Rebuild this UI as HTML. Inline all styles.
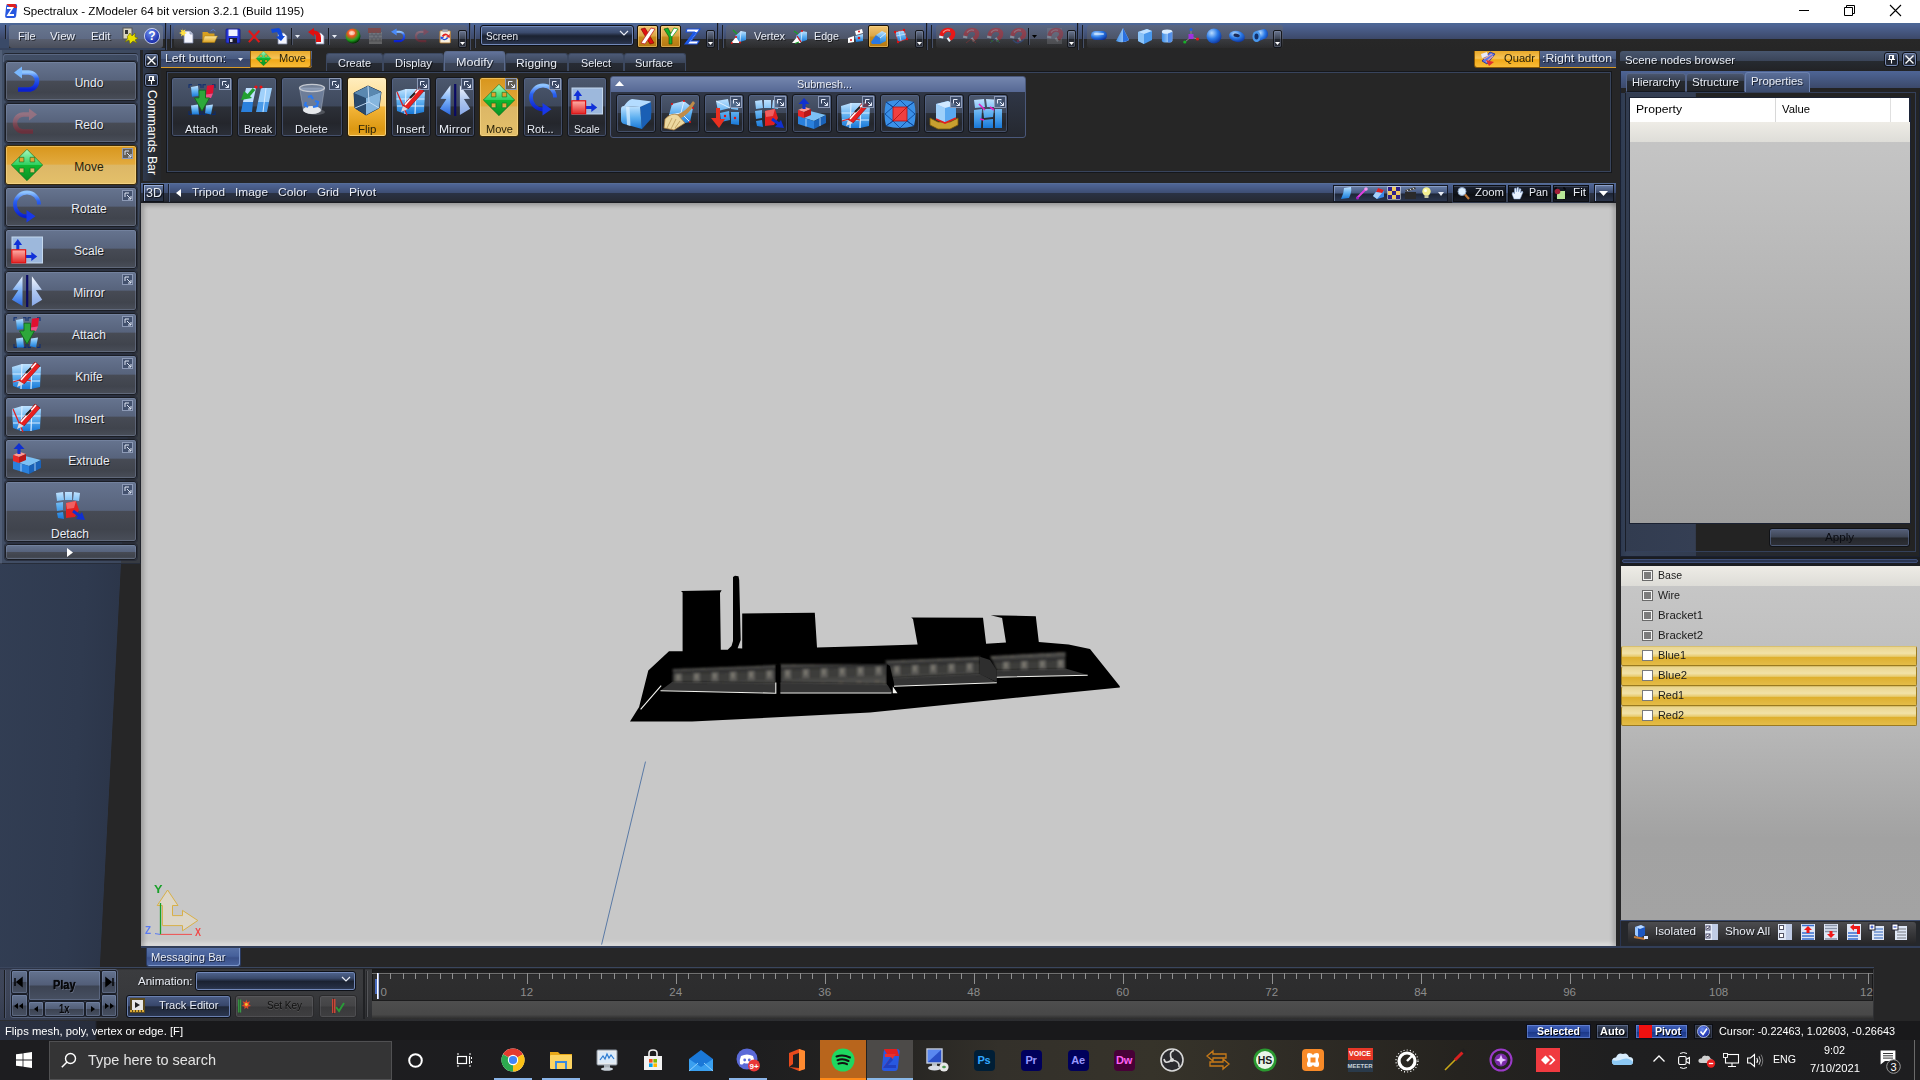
<!DOCTYPE html>
<html><head><meta charset="utf-8"><title>ZModeler</title><style>
html,body{margin:0;padding:0;}
body{width:1920px;height:1080px;overflow:hidden;position:relative;background:#222324;font-family:"Liberation Sans",sans-serif;font-size:12px;color:#e8ecf4;}
div{position:absolute;box-sizing:border-box;}
svg{position:absolute;overflow:visible;}
.t{white-space:nowrap;line-height:14px;font-size:12px;}
.ts{white-space:nowrap;line-height:14px;font-size:12px;text-shadow:1px 1px 0 rgba(0,0,0,.6);}
.btn{border:1px solid #1a1d24;border-radius:3px;background:linear-gradient(#66748f 0%,#57637c 48%,#474b55 50%,#40444d 80%,#494e59 100%);box-shadow:inset 0 0 0 1px rgba(140,155,185,.35);}
.btny{border:1px solid #3a2a08;border-radius:3px;background:linear-gradient(#d8961c 0%,#e2aa3e 48%,#dcb766 50%,#e4c06a 100%);box-shadow:inset 0 0 0 1px rgba(255,225,150,.5);}
.cbtn{border:1px solid #15171c;border-radius:3px;background:linear-gradient(#4c586e 0%,#3e485c 48%,#2c3038 50%,#24262c 78%,#2b2f38 100%);box-shadow:inset 0 0 0 1px rgba(90,108,150,.55);}
.cbtny{border:1px solid #2a1c04;border-radius:3px;background:linear-gradient(#ffedbe 0%,#fcd98a 48%,#f4b63a 50%,#dc9812 88%,#e6a626 100%);box-shadow:inset 0 0 0 1px rgba(255,240,190,.6);}
.pop{border:1px solid #8d9ab6;background:rgba(58,72,102,.75);}
</style></head><body><div style="left:0px;top:0px;width:1920px;height:23px;background:#fff;"></div>
<div class="t" style="left:23px;top:5px;font-size:11.5px;line-height:13.5px;transform-origin:0 0;transform:scaleX(1.0115);color:#000;">Spectralux - ZModeler 64 bit version 3.2.1 (Build 1195)</div>
<div style="left:0px;top:23px;width:1920px;height:27px;background:linear-gradient(#4a6896 0,#4e6494 2px,#3c4868 16px,#272727 16.5px,#262626 100%);"></div>
<div style="left:0px;top:50px;width:1920px;height:990px;background:#262627;"></div>
<div style="left:0px;top:50px;width:141px;height:918px;background:linear-gradient(93deg,#333f55 0%,#2f3a4f 60%,#2c364a 78%,#262627 78.4%);"></div>
<div style="left:141px;top:202.5px;width:1475px;height:743.5px;background:#c8c8c8;box-shadow:inset 5px 5px 4px -2px rgba(0,0,0,.22),inset -5px 0 4px -2px rgba(0,0,0,.18),inset 0 -5px 4px -2px rgba(255,255,255,.45);"></div>
<div style="left:0px;top:1040px;width:1920px;height:40px;background:#1f1f21;"></div>
<svg width="0" height="0" style="position:absolute"><defs>
<linearGradient id="gBlue" x1="0" y1="0" x2="0" y2="1"><stop offset="0" stop-color="#8fc4ff"/><stop offset=".35" stop-color="#2a62f0"/><stop offset="1" stop-color="#0a1fd0"/></linearGradient>
<linearGradient id="gRed" x1="0" y1="0" x2="0" y2="1"><stop offset="0" stop-color="#c07880"/><stop offset="1" stop-color="#8a2030"/></linearGradient>
<linearGradient id="gGreen" x1="0" y1="0" x2="1" y2="1"><stop offset="0" stop-color="#7df09a"/><stop offset=".5" stop-color="#19b93a"/><stop offset="1" stop-color="#078a1e"/></linearGradient>
<linearGradient id="gLB" x1="0" y1="0" x2="0" y2="1"><stop offset="0" stop-color="#bfe2ff"/><stop offset=".5" stop-color="#5fb0f0"/><stop offset="1" stop-color="#1878d8"/></linearGradient>
<linearGradient id="gLB2" x1="0" y1="0" x2="1" y2="0"><stop offset="0" stop-color="#3f8fe8"/><stop offset="1" stop-color="#cfe6ff"/></linearGradient>
<linearGradient id="gRedBox" x1="0" y1="0" x2="0" y2="1"><stop offset="0" stop-color="#ffb0a8"/><stop offset="1" stop-color="#e02828"/></linearGradient>
<radialGradient id="gBall" cx=".4" cy=".3" r=".7"><stop offset="0" stop-color="#ffd0a0"/><stop offset=".35" stop-color="#f05020"/><stop offset=".7" stop-color="#20a020"/><stop offset="1" stop-color="#003000"/></radialGradient>
<radialGradient id="gHelp" cx=".4" cy=".3" r=".8"><stop offset="0" stop-color="#6a8cf0"/><stop offset="1" stop-color="#0a1a9a"/></radialGradient>
<radialGradient id="gSph" cx=".35" cy=".3" r=".8"><stop offset="0" stop-color="#b8dcff"/><stop offset=".5" stop-color="#2a7ae8"/><stop offset="1" stop-color="#0a2a90"/></radialGradient>
<linearGradient id="gFold" x1="0" y1="0" x2="0" y2="1"><stop offset="0" stop-color="#ffe9a0"/><stop offset="1" stop-color="#d9a020"/></linearGradient>
<linearGradient id="gGlass" x1="0" y1="0" x2="1" y2="1"><stop offset="0" stop-color="#e8f0f8"/><stop offset="1" stop-color="#98a4b4"/></linearGradient>
<linearGradient id="gMirL" x1="0" y1="0" x2="0" y2="1"><stop offset="0" stop-color="#e8f2ff"/><stop offset=".5" stop-color="#7ab0f8"/><stop offset="1" stop-color="#2a68e0"/></linearGradient>
<linearGradient id="gMirR" x1="0" y1="0" x2="0" y2="1"><stop offset="0" stop-color="#f4f8ff"/><stop offset=".5" stop-color="#b0c8f0"/><stop offset="1" stop-color="#88a8e8"/></linearGradient>
<linearGradient id="gGreen2" x1="0" y1="0" x2="0" y2="1"><stop offset="0" stop-color="#a8f8c0"/><stop offset=".49" stop-color="#30d060"/><stop offset=".5" stop-color="#10b830"/><stop offset="1" stop-color="#0a9024"/></linearGradient>
</defs></svg>
<div style="left:0px;top:50px;width:141px;height:514px;background:rgba(120,135,165,.22);border-right:1px solid #20242c;border-bottom:1px solid #272d3a;"></div>
<div style="left:0px;top:50px;width:2px;height:514px;background:rgba(150,165,195,.18);"></div>
<div style="left:3px;top:54px;width:135px;height:8px;border:1px solid #596680;border-bottom:0;border-radius:3px 3px 0 0;box-shadow:0 -1px 0 #222732;"></div>
<div style="left:4px;top:60px;width:134px;height:42px;border:1px solid rgba(20,24,32,.55);border-radius:4px;background:rgba(90,100,125,.35);"></div>
<div class="btn" style="left:5px;top:61px;width:132px;height:40px;"></div>
<svg style="left:11px;top:65px;" width="32" height="32" viewBox="0 0 32 32"><path d="M10 7.5 H17.5 A8.5 8.5 0 0 1 17.5 24.5 H7" fill="none" stroke="url(#gBlue)" stroke-width="4.6"/><path d="M3 7.5 L11 1.5 L11 13.5 Z" fill="#7ab8ff"/></svg>
<div class="ts" style="left:43px;top:76px;width:92px;text-align:center;">Undo</div>
<div style="left:4px;top:102px;width:134px;height:42px;border:1px solid rgba(20,24,32,.55);border-radius:4px;background:rgba(90,100,125,.35);"></div>
<div class="btn" style="left:5px;top:103px;width:132px;height:40px;"></div>
<svg style="left:11px;top:107px;" width="32" height="32" viewBox="0 0 32 32"><g opacity=".55"><path d="M18 7.5 H12.5 A8.5 8.5 0 0 0 12.5 24.5 H22" fill="none" stroke="url(#gRed)" stroke-width="4.6"/><path d="M26 7.5 L18 1.5 L18 13.5 Z" fill="#c07880"/></g></svg>
<div class="ts" style="left:43px;top:118px;width:92px;text-align:center;">Redo</div>
<div style="left:4px;top:144px;width:134px;height:42px;border:1px solid rgba(20,24,32,.55);border-radius:4px;background:rgba(90,100,125,.35);"></div>
<div class="btny" style="left:5px;top:145px;width:132px;height:40px;"></div>
<svg style="left:11px;top:149px;" width="32" height="32" viewBox="0 0 32 32"><path fill-rule="evenodd" fill="url(#gGreen2)" stroke="#0a6a1a" stroke-width=".6" d="M16 0.3 L31.7 16 L16 31.7 L0.3 16 Z M8.3 8.3 h4.6 v4.6 h-4.6 Z M19.1 8.3 h4.6 v4.6 h-4.6 Z M8.3 19.1 h4.6 v4.6 h-4.6 Z M19.1 19.1 h4.6 v4.6 h-4.6 Z"/></svg>
<div class="t" style="left:43px;top:160px;width:92px;text-align:center;color:#2a2208;">Move</div>
<div class="pop" style="left:122px;top:148px;width:11px;height:11px;"><svg width="9" height="9" viewBox="0 0 9 9" style="left:0;top:0"><path d="M2 6 V2 H6" fill="none" stroke="#dfe6f4" stroke-width="1"/><path d="M4 4 L8 8 M8 5 V8 H5" fill="none" stroke="#dfe6f4" stroke-width="1"/></svg></div>
<div style="left:4px;top:186px;width:134px;height:42px;border:1px solid rgba(20,24,32,.55);border-radius:4px;background:rgba(90,100,125,.35);"></div>
<div class="btn" style="left:5px;top:187px;width:132px;height:40px;"></div>
<svg style="left:11px;top:191px;" width="32" height="32" viewBox="0 0 32 32"><path d="M28 13.5 A12 12 0 1 0 16 25.5" fill="none" stroke="url(#gBlue)" stroke-width="3.8"/><path d="M15.5 19 L24.5 25.2 L15.5 31.5 Z" fill="#1838e8"/></svg>
<div class="ts" style="left:43px;top:202px;width:92px;text-align:center;">Rotate</div>
<div class="pop" style="left:122px;top:190px;width:11px;height:11px;"><svg width="9" height="9" viewBox="0 0 9 9" style="left:0;top:0"><path d="M2 6 V2 H6" fill="none" stroke="#dfe6f4" stroke-width="1"/><path d="M4 4 L8 8 M8 5 V8 H5" fill="none" stroke="#dfe6f4" stroke-width="1"/></svg></div>
<div style="left:4px;top:228px;width:134px;height:42px;border:1px solid rgba(20,24,32,.55);border-radius:4px;background:rgba(90,100,125,.35);"></div>
<div class="btn" style="left:5px;top:229px;width:132px;height:40px;"></div>
<svg style="left:11px;top:233px;" width="32" height="32" viewBox="0 0 32 32"><rect x="1" y="4" width="30.5" height="26" fill="#9db8dc" stroke="#c4d8ee" stroke-width="1"/><path d="M6.8 17 V11" stroke="#1030d8" stroke-width="3"/><path d="M2.5 12 L6.8 6 L11.1 12 Z" fill="#1030d8"/><path d="M15 23.5 H21" stroke="#1030d8" stroke-width="3"/><path d="M20.3 19 L26.2 23.5 L20.3 28 Z" fill="#1030d8"/><rect x="0.8" y="16.8" width="13.8" height="13" fill="url(#gRedBox)" stroke="#e01010" stroke-width="1.2"/></svg>
<div class="ts" style="left:43px;top:244px;width:92px;text-align:center;">Scale</div>
<div style="left:4px;top:270px;width:134px;height:42px;border:1px solid rgba(20,24,32,.55);border-radius:4px;background:rgba(90,100,125,.35);"></div>
<div class="btn" style="left:5px;top:271px;width:132px;height:40px;"></div>
<svg style="left:11px;top:275px;" width="32" height="32" viewBox="0 0 32 32"><path d="M11.5 1.3 L1.5 14.75 L7.4 15 L0.9 24.75 L11.5 31 Z" fill="url(#gMirL)"/><path d="M20.9 1.3 L30.9 14.75 L24.9 15 L31.2 24.75 L20.9 31 Z" fill="url(#gMirR)"/><path d="M16.2 0 V32" stroke="#0a0a64" stroke-width="2.2"/></svg>
<div class="ts" style="left:43px;top:286px;width:92px;text-align:center;">Mirror</div>
<div class="pop" style="left:122px;top:274px;width:11px;height:11px;"><svg width="9" height="9" viewBox="0 0 9 9" style="left:0;top:0"><path d="M2 6 V2 H6" fill="none" stroke="#dfe6f4" stroke-width="1"/><path d="M4 4 L8 8 M8 5 V8 H5" fill="none" stroke="#dfe6f4" stroke-width="1"/></svg></div>
<div style="left:4px;top:312px;width:134px;height:42px;border:1px solid rgba(20,24,32,.55);border-radius:4px;background:rgba(90,100,125,.35);"></div>
<div class="btn" style="left:5px;top:313px;width:132px;height:40px;"></div>
<svg style="left:11px;top:317px;" width="32" height="32" viewBox="0 0 32 32"><g transform="translate(0,-1.5) scale(1,1.1)"><g fill="none" stroke="#0a2a70" stroke-width="1"><path d="M3 5 V2 H6 M12 2 H15 V5"/><path d="M17 5 V2 H20 M26 2 H29 V5"/><path d="M3 26 V29 H6 M12 29 H15 V26"/><path d="M17 26 V29 H20 M26 29 H29 V26"/></g><path d="M5 4 L12 3 L13 12 L6 13 Z" fill="url(#gLB)"/><path d="M5 21 L12 20 L13 29 L6 29 Z" fill="url(#gLB)"/><path d="M20 21 L27 20 L25 29 L19 28 Z" fill="url(#gLB)"/><path d="M21 3 L28 2 L27 10 L20 11 Z" fill="#e01030"/><path d="M20 11 L27 10 L25 14 L20 14 Z" fill="#f05088"/><path d="M13 7 L19.5 7 L19.5 14 L23.5 14 L16 26 L8.5 14 L13 14 Z" fill="#2da83a" stroke="#0d6a1a" stroke-width=".8"/></g></svg>
<div class="ts" style="left:43px;top:328px;width:92px;text-align:center;">Attach</div>
<div class="pop" style="left:122px;top:316px;width:11px;height:11px;"><svg width="9" height="9" viewBox="0 0 9 9" style="left:0;top:0"><path d="M2 6 V2 H6" fill="none" stroke="#dfe6f4" stroke-width="1"/><path d="M4 4 L8 8 M8 5 V8 H5" fill="none" stroke="#dfe6f4" stroke-width="1"/></svg></div>
<div style="left:4px;top:354px;width:134px;height:42px;border:1px solid rgba(20,24,32,.55);border-radius:4px;background:rgba(90,100,125,.35);"></div>
<div class="btn" style="left:5px;top:355px;width:132px;height:40px;"></div>
<svg style="left:11px;top:359px;" width="32" height="32" viewBox="0 0 32 32"><path d="M1 8 L11 5 L21 5 L30 8 L29 28 L20 30 L10 30 L2 27 Z" fill="url(#gLB)"/><path d="M11 5 L10 30 M21 5 L20 30 M1.5 15 L29.5 15 M2 22 L29 22" stroke="#d8ecff" stroke-width="1.2" fill="none"/><path d="M2 23 L12 20 L20 22" stroke="#e02020" stroke-width="1.2" fill="none"/><path d="M8 22 L24 3 L29 7 L13 25 Z" fill="#e82020" stroke="#8a0808" stroke-width=".6"/><path d="M10 21 L25 4" stroke="#fff" stroke-width="1.5"/><path d="M15 14 L20 9" stroke="#222" stroke-width="2"/><path d="M8 22 L13 25 L6 28 Z" fill="#d8d8e0"/></svg>
<div class="ts" style="left:43px;top:370px;width:92px;text-align:center;">Knife</div>
<div class="pop" style="left:122px;top:358px;width:11px;height:11px;"><svg width="9" height="9" viewBox="0 0 9 9" style="left:0;top:0"><path d="M2 6 V2 H6" fill="none" stroke="#dfe6f4" stroke-width="1"/><path d="M4 4 L8 8 M8 5 V8 H5" fill="none" stroke="#dfe6f4" stroke-width="1"/></svg></div>
<div style="left:4px;top:396px;width:134px;height:42px;border:1px solid rgba(20,24,32,.55);border-radius:4px;background:rgba(90,100,125,.35);"></div>
<div class="btn" style="left:5px;top:397px;width:132px;height:40px;"></div>
<svg style="left:11px;top:401px;" width="32" height="32" viewBox="0 0 32 32"><path d="M1 8 L11 5 L21 5 L30 8 L29 28 L20 30 L10 30 L2 27 Z" fill="url(#gLB)"/><path d="M11 5 L10 30 M21 5 L20 30 M1.5 15 L29.5 15 M2 22 L29 22" stroke="#d8ecff" stroke-width="1.2" fill="none"/><path d="M2 8 L12 31" stroke="#e02020" stroke-width="1.3" fill="none"/><path d="M8 22 L24 3 L29 7 L13 25 Z" fill="#e82020" stroke="#8a0808" stroke-width=".6"/><path d="M10 21 L25 4" stroke="#fff" stroke-width="1.5"/><path d="M15 14 L20 9" stroke="#222" stroke-width="2"/><path d="M8 22 L13 25 L6 28 Z" fill="#d8d8e0"/></svg>
<div class="ts" style="left:43px;top:412px;width:92px;text-align:center;">Insert</div>
<div class="pop" style="left:122px;top:400px;width:11px;height:11px;"><svg width="9" height="9" viewBox="0 0 9 9" style="left:0;top:0"><path d="M2 6 V2 H6" fill="none" stroke="#dfe6f4" stroke-width="1"/><path d="M4 4 L8 8 M8 5 V8 H5" fill="none" stroke="#dfe6f4" stroke-width="1"/></svg></div>
<div style="left:4px;top:438px;width:134px;height:42px;border:1px solid rgba(20,24,32,.55);border-radius:4px;background:rgba(90,100,125,.35);"></div>
<div class="btn" style="left:5px;top:439px;width:132px;height:40px;"></div>
<svg style="left:11px;top:443px;" width="32" height="32" viewBox="0 0 32 32"><path d="M2 18 L14 13 L30 17 L18 23 Z" fill="#7cc0f4"/><path d="M2 18 L18 23 L18 31 L2 26 Z" fill="#2a80dc"/><path d="M18 23 L30 17 L30 25 L18 31 Z" fill="#1a62b8"/><path d="M10 20.5 L10 28.5 M24 20 L24 28" stroke="#bfe0ff" stroke-width=".8"/><path d="M2 12 L9 9 L15 11 L8 14 Z" fill="#ff9a90"/><path d="M2 12 L8 14 L8 20 L2 18 Z" fill="#e82828"/><path d="M8 14 L15 11 L15 17 L8 20 Z" fill="#b81818"/><path d="M8 11 V5" stroke="#1030d0" stroke-width="3.2"/><path d="M2.5 6 L8 0 L13.5 6 Z" fill="#1030d0"/></svg>
<div class="ts" style="left:43px;top:454px;width:92px;text-align:center;">Extrude</div>
<div class="pop" style="left:122px;top:442px;width:11px;height:11px;"><svg width="9" height="9" viewBox="0 0 9 9" style="left:0;top:0"><path d="M2 6 V2 H6" fill="none" stroke="#dfe6f4" stroke-width="1"/><path d="M4 4 L8 8 M8 5 V8 H5" fill="none" stroke="#dfe6f4" stroke-width="1"/></svg></div>
<div style="left:4px;top:480px;width:134px;height:63px;border:1px solid rgba(20,24,32,.55);border-radius:4px;background:rgba(90,100,125,.35);"></div>
<div class="btn" style="left:5px;top:481px;width:132px;height:61px;"></div>
<svg style="left:53px;top:490px;" width="32" height="32" viewBox="0 0 32 32"><path d="M3 3 L10 2 L11 10 L4 11 Z M12 2 L19 2 L19 10 L12 10 Z M21 2 L27 3 L26 11 L20 10 Z M3 13 L10 12 L10 20 L4 21 Z M4 23 L10 22 L11 29 L5 28 Z" fill="url(#gLB)"/><path d="M13 13 L23 11 L26 20 L22 27 L13 28 Z" fill="#e02020"/><path d="M13 13 L23 11 L21 18 L14 19 Z" fill="#f06060"/><path d="M20 21 L27 26" stroke="#1030d0" stroke-width="3"/><path d="M29 22 L32 30 L23 29 Z" fill="#1030d0"/></svg>
<div class="ts" style="left:6px;top:527px;width:128px;text-align:center;">Detach</div>
<div class="pop" style="left:122px;top:484px;width:11px;height:11px;"><svg width="9" height="9" viewBox="0 0 9 9" style="left:0;top:0"><path d="M2 6 V2 H6" fill="none" stroke="#dfe6f4" stroke-width="1"/><path d="M4 4 L8 8 M8 5 V8 H5" fill="none" stroke="#dfe6f4" stroke-width="1"/></svg></div>
<div style="left:4px;top:543px;width:134px;height:18px;border:1px solid rgba(20,24,32,.55);border-radius:4px;background:rgba(90,100,125,.35);"></div>
<div class="btn" style="left:5px;top:544px;width:132px;height:16px;"></div>
<svg style="left:67px;top:548px;" width="6" height="9" viewBox="0 0 6 9"><path d="M0 0 L6 4.5 L0 9 Z" fill="#fff"/></svg>
<div style="left:165px;top:23px;width:1px;height:27px;background:#171a21;"></div>
<div style="left:166px;top:23px;width:1px;height:27px;background:#4b5876;opacity:.8;"></div>
<div style="left:469px;top:23px;width:1px;height:27px;background:#171a21;"></div>
<div style="left:470px;top:23px;width:1px;height:27px;background:#4b5876;opacity:.8;"></div>
<div style="left:717px;top:23px;width:1px;height:27px;background:#171a21;"></div>
<div style="left:718px;top:23px;width:1px;height:27px;background:#4b5876;opacity:.8;"></div>
<div style="left:926px;top:23px;width:1px;height:27px;background:#171a21;"></div>
<div style="left:927px;top:23px;width:1px;height:27px;background:#4b5876;opacity:.8;"></div>
<div style="left:1077px;top:23px;width:1px;height:27px;background:#171a21;"></div>
<div style="left:1078px;top:23px;width:1px;height:27px;background:#4b5876;opacity:.8;"></div>
<div style="left:5px;top:25px;width:1px;height:23px;background:#1b1e26;"></div>
<div style="left:6px;top:25px;width:1px;height:23px;background:#566483;opacity:.7;"></div>
<div style="left:170px;top:25px;width:1px;height:23px;background:#1b1e26;"></div>
<div style="left:171px;top:25px;width:1px;height:23px;background:#566483;opacity:.7;"></div>
<div style="left:474px;top:25px;width:1px;height:23px;background:#1b1e26;"></div>
<div style="left:475px;top:25px;width:1px;height:23px;background:#566483;opacity:.7;"></div>
<div style="left:722px;top:25px;width:1px;height:23px;background:#1b1e26;"></div>
<div style="left:723px;top:25px;width:1px;height:23px;background:#566483;opacity:.7;"></div>
<div style="left:931px;top:25px;width:1px;height:23px;background:#1b1e26;"></div>
<div style="left:932px;top:25px;width:1px;height:23px;background:#566483;opacity:.7;"></div>
<div style="left:1082px;top:25px;width:1px;height:23px;background:#1b1e26;"></div>
<div style="left:1083px;top:25px;width:1px;height:23px;background:#566483;opacity:.7;"></div>
<div style="left:9px;top:25px;width:154px;height:23px;background:linear-gradient(#68768f 0,#5e6a84 14px,#585e6e 14.5px,#4a4e5a 100%);border-radius:3px;"></div>
<div style="left:0px;top:39px;width:9px;height:11px;background:#3a4a68;"></div>
<div style="left:0px;top:48px;width:165px;height:2px;background:#35425c;"></div>
<div style="left:174px;top:25px;width:293px;height:23px;background:linear-gradient(rgba(105,105,105,.42) 0,rgba(100,100,100,.40) 14px,rgba(100,105,120,.30) 14.5px,rgba(100,105,120,.08) 100%);border-radius:3px;"></div>
<div style="left:726px;top:25px;width:198px;height:23px;background:linear-gradient(rgba(105,105,105,.42) 0,rgba(100,100,100,.40) 14px,rgba(100,105,120,.30) 14.5px,rgba(100,105,120,.08) 100%);border-radius:3px;"></div>
<div style="left:936px;top:25px;width:139px;height:23px;background:linear-gradient(rgba(105,105,105,.42) 0,rgba(100,100,100,.40) 14px,rgba(100,105,120,.30) 14.5px,rgba(100,105,120,.08) 100%);border-radius:3px;"></div>
<div style="left:1087px;top:25px;width:196px;height:23px;background:linear-gradient(rgba(105,105,105,.42) 0,rgba(100,100,100,.40) 14px,rgba(100,105,120,.30) 14.5px,rgba(100,105,120,.08) 100%);border-radius:3px;"></div>
<div class="ts" style="left:17.5px;top:29.5px;font-size:11px;line-height:13.0px;transform-origin:0 0;transform:scaleX(0.9872);">File</div>
<div class="ts" style="left:50px;top:29.5px;font-size:11px;line-height:13.0px;transform-origin:0 0;transform:scaleX(1.0573);">View</div>
<div class="ts" style="left:90.5px;top:29.5px;font-size:11px;line-height:13.0px;transform-origin:0 0;transform:scaleX(1.0289);">Edit</div>
<svg style="left:122px;top:28px;" width="16" height="16" viewBox="0 0 16 16"><rect x="1" y="0" width="9" height="11" fill="#d8d4c0" stroke="#555" stroke-width="1"/><rect x="3" y="2" width="3" height="4" fill="#333"/><path d="M5 9 L8 5 L10 8 L13 5 L13 9 L16 10 L13 12 L15 15 L11 13 L8 16 L7 12 L3 14 L6 10 Z" fill="#e8e000" stroke="#6a6a00" stroke-width=".6"/></svg>
<svg style="left:144px;top:28px;" width="16" height="16" viewBox="0 0 16 16"><circle cx="8" cy="8" r="7.6" fill="url(#gHelp)" stroke="#cfd8f0" stroke-width=".9"/><text x="8" y="12.3" font-family="Liberation Sans" font-weight="bold" font-size="12" text-anchor="middle" fill="#fff">?</text></svg>
<svg style="left:179px;top:28px;" width="16" height="16" viewBox="0 0 16 16"><path d="M5 3 H11 L14 6 V15 H5 Z" fill="#f4f6ff" stroke="#7a84a0" stroke-width=".8"/><path d="M11 3 V6 H14" fill="#c8d0e8" stroke="#7a84a0" stroke-width=".6"/><path d="M3 0 L4 2.5 L6.5 1.5 L5.5 4 L8 5 L5.5 6 L6 8.5 L4 7 L2 8.5 L2.5 6 L0 5 L2.5 4 L1.5 1.5 L3.5 2.5 Z" fill="#ffe040"/></svg>
<svg style="left:201px;top:28px;" width="17" height="16" viewBox="0 0 16 16"><path d="M1 4 H6 L7.5 5.5 H13 V14 H1 Z" fill="#d8a020"/><path d="M3 8 H16 L13 14.5 H1 Z" fill="url(#gFold)" stroke="#a87808" stroke-width=".5"/><path d="M9 3 Q12 0 14 3" fill="none" stroke="#5a7ac8" stroke-width="1"/></svg>
<svg style="left:225px;top:28px;" width="16" height="16" viewBox="0 0 16 16"><rect x="1" y="1" width="14" height="14" rx="1" fill="#2838d8" stroke="#10188a" stroke-width=".8"/><rect x="3.5" y="1.5" width="9" height="6.5" fill="#f0f2ff"/><rect x="4" y="10" width="8" height="5" fill="#1a1a30"/><rect x="5" y="11" width="2.5" height="3" fill="#d8d8e8"/></svg>
<svg style="left:248px;top:28px;" width="14" height="16" viewBox="0 0 16 16"><path d="M1 2 L13 15 M13 2 L1 15" stroke="#e01818" stroke-width="2.4" fill="none"/></svg>
<svg style="left:271px;top:28px;" width="16" height="16" viewBox="0 0 16 16"><path d="M7 5 H13 L16 8 V16 H7 Z" fill="#f4f6ff" stroke="#7a84a0" stroke-width=".8"/><path d="M0 1 L8 0 L10 2 L12 8 L14 8 L10 13 L5 9 L8 8 L6 4 L1 5 Z" fill="#1048d8"/></svg>
<div style="left:291px;top:28px;width:1px;height:17px;background:#171a20;"></div>
<div style="left:292px;top:28px;width:1px;height:17px;background:#5b6884;opacity:.6;"></div>
<svg style="left:295px;top:35px;" width="5" height="3" viewBox="0 0 5 3"><path d="M0 0 H5 L2.5 3 Z" fill="#e8ecf4"/></svg>
<svg style="left:308px;top:28px;" width="16" height="16" viewBox="0 0 16 16"><path d="M8 5 H13 L16 8 V16 H8 Z" fill="#f4f6ff" stroke="#7a84a0" stroke-width=".8"/><path d="M0 4 L6 0 L6 2.5 Q13 3 13 10 V14 H8 V10 Q8 6 6 6 L6 8.5 Z" fill="#e01010"/></svg>
<div style="left:328px;top:28px;width:1px;height:17px;background:#171a20;"></div>
<div style="left:329px;top:28px;width:1px;height:17px;background:#5b6884;opacity:.6;"></div>
<svg style="left:332px;top:35px;" width="5" height="3" viewBox="0 0 5 3"><path d="M0 0 H5 L2.5 3 Z" fill="#e8ecf4"/></svg>
<svg style="left:345px;top:28px;" width="16" height="16" viewBox="0 0 16 16"><circle cx="8" cy="8" r="7.5" fill="url(#gBall)"/><ellipse cx="7" cy="5" rx="3" ry="2" fill="#fff" opacity=".45"/></svg>
<svg style="left:367px;top:28px;" width="16" height="16" viewBox="0 0 16 16"><g opacity=".55"><rect x="2" y="4" width="13" height="12" fill="#8a8a8a"/><rect x="1" y="0" width="13" height="5" fill="#9a3828"/><path d="M2 7 H15 M2 10 H15 M2 13 H15 M5 4 V7 M9 4 V7 M13 4 V7 M7 7 V10 M11 7 V10 M5 10 V13 M9 10 V13 M13 10 V13" stroke="#555" stroke-width=".7"/></g></svg>
<svg style="left:391px;top:28px;" width="15" height="16" viewBox="0 0 16 16"><path d="M5 3.5 H9 A4.8 4.8 0 0 1 9 13.5 H3" fill="none" stroke="url(#gBlue)" stroke-width="2.4"/><path d="M0 3.5 L6 0 L6 7.5 Z" fill="#4a8af8"/></svg>
<svg style="left:415px;top:28px;" width="15" height="16" viewBox="0 0 16 16"><g opacity=".5"><path d="M10 3.5 H6 A4.8 4.8 0 0 0 6 13.5 H12" fill="none" stroke="url(#gRed)" stroke-width="2.4"/><path d="M15 3.5 L9 0 L9 7.5 Z" fill="#a04050"/></g></svg>
<svg style="left:439px;top:28px;" width="14" height="16" viewBox="0 0 16 16"><rect x="1" y="2" width="12" height="14" rx="1" fill="#f8f0e0" stroke="#b07830" stroke-width="1"/><rect x="4" y="0.5" width="6" height="3" fill="#a8a8b0"/><path d="M3 8 Q7 3 11 7 L12 5 L12.5 10 L8 9 L10 8 Q7 6 5 9 Z" fill="#e02020"/><path d="M11 10 Q7 15 3 11 L2 13 L1.5 8.5 L6 9.5 L4 10.5 Q7 12.5 9 9.5 Z" fill="#2050e0"/></svg>
<div style="left:458px;top:30px;width:9px;height:18px;border:1px solid #14161b;border-radius:2px;background:linear-gradient(#6a7690,#3a4150 50%,#22252c 52%,#30343e);box-shadow:inset 0 0 0 1px rgba(150,160,185,.3);"></div>
<svg style="left:460px;top:42px;" width="5" height="3" viewBox="0 0 5 3"><path d="M0 0 H5 L2.5 3 Z" fill="#fff"/></svg>
<div style="left:480px;top:25px;width:154px;height:21px;border:1px solid #0e1118;border-radius:3px;background:linear-gradient(#51668f 0%,#3a4a6c 35%,#1b2231 52%,#232c40 80%,#2e3a55 100%);box-shadow:inset 0 0 0 1px #7288b8;"></div>
<div class="ts" style="left:486px;top:29.5px;font-size:11px;line-height:13.0px;transform-origin:0 0;transform:scaleX(0.9182);">Screen</div>
<svg style="left:620px;top:31px;" width="8" height="5" viewBox="0 0 8 5"><path d="M0 0 L4 4 L8 0" fill="none" stroke="#e8ecf4" stroke-width="1.2"/></svg>
<div style="left:637px;top:25px;width:21px;height:23px;border:1px solid #1c1304;border-radius:2px;background:linear-gradient(#efc374 0%,#dca847 45%,#c68a1c 55%,#b47812 100%);box-shadow:inset 0 0 0 1px rgba(255,225,150,.45);"></div>
<div style="left:660px;top:25px;width:21px;height:23px;border:1px solid #1c1304;border-radius:2px;background:linear-gradient(#efc374 0%,#dca847 45%,#c68a1c 55%,#b47812 100%);box-shadow:inset 0 0 0 1px rgba(255,225,150,.45);"></div>
<svg style="left:640px;top:28px;" width="16" height="18" viewBox="0 0 16 18"><path d="M1 1 L5 0 L14 15 L10 16 Z" fill="#e01010" stroke="#7a0000" stroke-width=".6"/><path d="M11 0 L15 1 L5 16 L1 15 Z" fill="#fff" stroke="#c02020" stroke-width=".8"/></svg>
<svg style="left:663px;top:28px;" width="16" height="18" viewBox="0 0 16 18"><path d="M1 1 L5 0 L9 8 L9 16 L6 16 L6 9 Z" fill="#18b028" stroke="#064a0c" stroke-width=".6"/><path d="M11 0 L15 1 L9 9 L7 7 Z" fill="#fff" stroke="#18a028" stroke-width=".8"/></svg>
<svg style="left:685px;top:28px;" width="16" height="18" viewBox="0 0 16 18"><path d="M2 1 H15 L6 13 H14 L12 16 H0 L9 4 H1 Z" fill="#fff" stroke="#1a50e0" stroke-width="1.1"/><path d="M9 4 L0 16 L3 16 L12 4 Z" fill="#1a58e8"/></svg>
<div style="left:706px;top:30px;width:9px;height:18px;border:1px solid #14161b;border-radius:2px;background:linear-gradient(#6a7690,#3a4150 50%,#22252c 52%,#30343e);box-shadow:inset 0 0 0 1px rgba(150,160,185,.3);"></div>
<svg style="left:708px;top:42px;" width="5" height="3" viewBox="0 0 5 3"><path d="M0 0 H5 L2.5 3 Z" fill="#fff"/></svg>
<svg style="left:731px;top:28px;" width="16" height="16" viewBox="0 0 16 16"><path d="M4 8 L10 3 L15 4 L15 12 L9 14 L4 13 Z" fill="url(#gLB)"/><path d="M10 3 L9 14" stroke="#d8ecff" stroke-width=".8"/><path d="M0 15 L5 9 L9 15 Z" fill="#fff"/><path d="M2 2 L6 6" stroke="#18a028" stroke-width="1.2"/><circle cx="5" cy="9" r="1.1" fill="#e01010"/><circle cx="9" cy="14.5" r="1" fill="#e01010"/><circle cx="0.8" cy="15" r="1" fill="#e01010"/></svg>
<div class="ts" style="left:754px;top:29.5px;font-size:11px;line-height:13.0px;transform-origin:0 0;transform:scaleX(0.9941);">Vertex</div>
<svg style="left:792px;top:28px;" width="16" height="16" viewBox="0 0 16 16"><path d="M4 8 L10 3 L15 4 L15 12 L9 14 L4 13 Z" fill="url(#gLB)"/><path d="M10 3 L9 14" stroke="#d8ecff" stroke-width=".8"/><path d="M0 15 L5 9 L9 15 Z" fill="#fff"/><path d="M2 3 L6 6 M3 15.5 L7 14" stroke="#18a028" stroke-width="1.2"/><path d="M5 8 L9 14" stroke="#e01010" stroke-width="1.2"/><circle cx="10" cy="3" r="1" fill="#e01010"/></svg>
<div class="ts" style="left:814px;top:29.5px;font-size:11px;line-height:13.0px;transform-origin:0 0;transform:scaleX(0.9732);">Edge</div>
<svg style="left:848px;top:28px;" width="16" height="16" viewBox="0 0 16 16"><path d="M7 3 L14 1 L15 5 L8 7 Z" fill="#fff"/><path d="M7 8 L15 6 L15 13 L8 14 Z" fill="url(#gLB)"/><path d="M0 10 L6 8 L6 14 L0 15 Z" fill="#fff"/><circle cx="11" cy="10" r="1.3" fill="#e01010"/><circle cx="3" cy="12" r="1" fill="#e01010"/><circle cx="11" cy="3.5" r="1" fill="#e01010"/></svg>
<div style="left:868px;top:25px;width:21px;height:23px;border:1px solid #1c1304;border-radius:2px;background:linear-gradient(#efc374 0%,#dca847 45%,#c68a1c 55%,#b47812 100%);box-shadow:inset 0 0 0 1px rgba(255,225,150,.45);"></div>
<svg style="left:871px;top:29px;" width="16" height="16" viewBox="0 0 16 16"><path d="M0 13 L5 6 L9 9 L9 15 L1 15 Z" fill="#2a78e0"/><path d="M5 6 L11 2 L15 4 L15 12 L9 15 L9 9 Z" fill="url(#gLB)"/><path d="M9 9 L15 4" stroke="#e8f4ff" stroke-width=".8"/></svg>
<svg style="left:893px;top:28px;" width="16" height="16" viewBox="0 0 16 16"><path d="M2 4 L11 2 L14 11 L5 14 Z" fill="url(#gLB)" stroke="#c83030" stroke-width=".8"/><path d="M6 3 L8 13 M3 8 L13 6" stroke="#d8ecff" stroke-width=".7"/><circle cx="2" cy="4" r="1.2" fill="#e01010"/><circle cx="11" cy="2" r="1.2" fill="#e01010"/><circle cx="14" cy="11" r="1.2" fill="#e01010"/><circle cx="5" cy="14" r="1.2" fill="#e01010"/></svg>
<div style="left:915px;top:30px;width:9px;height:18px;border:1px solid #14161b;border-radius:2px;background:linear-gradient(#6a7690,#3a4150 50%,#22252c 52%,#30343e);box-shadow:inset 0 0 0 1px rgba(150,160,185,.3);"></div>
<svg style="left:917px;top:42px;" width="5" height="3" viewBox="0 0 5 3"><path d="M0 0 H5 L2.5 3 Z" fill="#fff"/></svg>
<svg style="left:939px;top:28px;" width="16" height="16" viewBox="0 0 16 16"><g opacity="1"><path d="M2.4 8 C3 3 8 0.8 11.5 2.2 C16 4.2 14.3 9 10.6 11" fill="none" stroke="#e81818" stroke-width="4.2"/><path d="M4 4.5 C6 2.2 9 1.6 11 2.4" fill="none" stroke="#ff8a80" stroke-width="1.2"/><path d="M2.4 8 L2 10.2" stroke="#e4ecf2" stroke-width="4.2"/><path d="M10.6 11 L8.9 12.2" stroke="#e4ecf2" stroke-width="4.2"/></g></svg>
<svg style="left:963px;top:28px;" width="16" height="16" viewBox="0 0 16 16"><g opacity="0.38"><path d="M2.4 8 C3 3 8 0.8 11.5 2.2 C16 4.2 14.3 9 10.6 11" fill="none" stroke="#e81818" stroke-width="4.2"/><path d="M4 4.5 C6 2.2 9 1.6 11 2.4" fill="none" stroke="#ff8a80" stroke-width="1.2"/><path d="M2.4 8 L2 10.2" stroke="#e4ecf2" stroke-width="4.2"/><path d="M10.6 11 L8.9 12.2" stroke="#e4ecf2" stroke-width="4.2"/><path d="M3 15 L8 11 L13 15" stroke="#c03030" fill="none"/></g></svg>
<svg style="left:987px;top:28px;" width="16" height="16" viewBox="0 0 16 16"><g opacity="0.38"><path d="M2.4 8 C3 3 8 0.8 11.5 2.2 C16 4.2 14.3 9 10.6 11" fill="none" stroke="#e81818" stroke-width="4.2"/><path d="M4 4.5 C6 2.2 9 1.6 11 2.4" fill="none" stroke="#ff8a80" stroke-width="1.2"/><path d="M2.4 8 L2 10.2" stroke="#e4ecf2" stroke-width="4.2"/><path d="M10.6 11 L8.9 12.2" stroke="#e4ecf2" stroke-width="4.2"/><path d="M3 15 L8 11 L13 15" stroke="#3060c0" fill="none"/><circle cx="5" cy="13" r="1" fill="#20a020"/><circle cx="11" cy="13" r="1" fill="#20a020"/></g></svg>
<svg style="left:1010px;top:28px;" width="16" height="16" viewBox="0 0 16 16"><g opacity="0.38"><path d="M2.4 8 C3 3 8 0.8 11.5 2.2 C16 4.2 14.3 9 10.6 11" fill="none" stroke="#e81818" stroke-width="4.2"/><path d="M4 4.5 C6 2.2 9 1.6 11 2.4" fill="none" stroke="#ff8a80" stroke-width="1.2"/><path d="M2.4 8 L2 10.2" stroke="#e4ecf2" stroke-width="4.2"/><path d="M10.6 11 L8.9 12.2" stroke="#e4ecf2" stroke-width="4.2"/><path d="M3 12 Q8 18 14 11" stroke="#3060c0" fill="none" stroke-width="1.4"/><circle cx="8" cy="13" r="1.2" fill="#d02060"/></g></svg>
<div style="left:1028px;top:28px;width:1px;height:17px;background:#171a20;"></div>
<div style="left:1029px;top:28px;width:1px;height:17px;background:#5b6884;opacity:.6;"></div>
<svg style="left:1032px;top:35px;" width="5" height="3" viewBox="0 0 5 3"><path d="M0 0 H5 L2.5 3 Z" fill="#000"/></svg>
<svg style="left:1047px;top:28px;" width="16" height="16" viewBox="0 0 16 16"><g opacity=".3"><rect x="0" y="0" width="15" height="16" fill="#8a8a90"/><g opacity="1"><path d="M2.4 8 C3 3 8 0.8 11.5 2.2 C16 4.2 14.3 9 10.6 11" fill="none" stroke="#e81818" stroke-width="4.2"/><path d="M4 4.5 C6 2.2 9 1.6 11 2.4" fill="none" stroke="#ff8a80" stroke-width="1.2"/><path d="M2.4 8 L2 10.2" stroke="#e4ecf2" stroke-width="4.2"/><path d="M10.6 11 L8.9 12.2" stroke="#e4ecf2" stroke-width="4.2"/></g></g></svg>
<div style="left:1067px;top:30px;width:9px;height:18px;border:1px solid #14161b;border-radius:2px;background:linear-gradient(#6a7690,#3a4150 50%,#22252c 52%,#30343e);box-shadow:inset 0 0 0 1px rgba(150,160,185,.3);"></div>
<svg style="left:1069px;top:42px;" width="5" height="3" viewBox="0 0 5 3"><path d="M0 0 H5 L2.5 3 Z" fill="#fff"/></svg>
<svg style="left:1091px;top:28px;" width="16" height="16" viewBox="0 0 16 16"><rect x="0" y="3" width="16" height="9" rx="4.5" fill="url(#gSph)"/><rect x="3" y="5" width="10" height="2" rx="1" fill="#cfe6ff" opacity=".7"/></svg>
<svg style="left:1115px;top:28px;" width="16" height="16" viewBox="0 0 16 16"><path d="M8 0 L14 12 Q8 16 1 13 Z" fill="url(#gLB2)"/><path d="M8 0 L14 12 Q11 14 8 14 Z" fill="#2a70e0"/></svg>
<svg style="left:1137px;top:28px;" width="16" height="16" viewBox="0 0 16 16"><path d="M1 4 L10 1 L15 3 L15 12 L7 16 L1 13 Z" fill="#4a98ec"/><path d="M1 4 L7 6 L7 16 L1 13 Z" fill="#8cc4f8"/><path d="M1 4 L10 1 L15 3 L7 6 Z" fill="#bfe0ff"/></svg>
<svg style="left:1161px;top:28px;" width="14" height="16" viewBox="0 0 16 16"><path d="M1 3 V13 A6 2.5 0 0 0 13 13 V3 Z" fill="url(#gLB2)"/><ellipse cx="7" cy="3" rx="6" ry="2.5" fill="#d8ecff"/><path d="M8 5 V15.5 A6 2.5 0 0 0 13 13 V3 Z" fill="#2a70e0" opacity=".7"/></svg>
<svg style="left:1183px;top:28px;" width="16" height="16" viewBox="0 0 16 16"><path d="M8 8 V2 M8 9 L14 11 M8 9 L2 14" stroke="#888" stroke-width="1"/><rect x="5.5" y="6" width="5" height="5" fill="#a030e0"/><circle cx="8" cy="1.5" r="1.5" fill="#2060e0"/><circle cx="14.5" cy="11" r="1.6" fill="#e01818"/><circle cx="1.8" cy="14" r="1.6" fill="#18b028"/></svg>
<svg style="left:1206px;top:28px;" width="16" height="16" viewBox="0 0 16 16"><circle cx="8" cy="8" r="7.5" fill="url(#gSph)"/></svg>
<svg style="left:1229px;top:28px;" width="16" height="16" viewBox="0 0 16 16"><ellipse cx="8" cy="8.5" rx="8" ry="5.5" fill="url(#gSph)" transform="rotate(12 8 8)"/><ellipse cx="7.5" cy="7.5" rx="3.2" ry="1.7" fill="#1a2a58" transform="rotate(12 8 8)"/></svg>
<svg style="left:1252px;top:28px;" width="16" height="16" viewBox="0 0 16 16"><path d="M4 3 L12 1 A4 5 0 0 1 12 11 L5 14 Z" fill="url(#gSph)"/><ellipse cx="4.5" cy="8.5" rx="4" ry="5.5" fill="#4a98ec"/><ellipse cx="4.5" cy="8.5" rx="2" ry="3" fill="#12306a"/></svg>
<div style="left:1273px;top:30px;width:9px;height:18px;border:1px solid #14161b;border-radius:2px;background:linear-gradient(#6a7690,#3a4150 50%,#22252c 52%,#30343e);box-shadow:inset 0 0 0 1px rgba(150,160,185,.3);"></div>
<svg style="left:1275px;top:42px;" width="5" height="3" viewBox="0 0 5 3"><path d="M0 0 H5 L2.5 3 Z" fill="#fff"/></svg>
<svg style="left:1799px;top:10px;" width="10" height="1" viewBox="0 0 10 1"><path d="M0 .5 H10" stroke="#000" stroke-width="1"/></svg>
<svg style="left:1844px;top:5px;" width="11" height="11" viewBox="0 0 11 11"><path d="M.5 2.5 H8.5 V10.5 H.5 Z M2.5 2.5 V.5 H10.5 V8.5 H8.5" fill="none" stroke="#000" stroke-width="1"/></svg>
<svg style="left:1890px;top:5px;" width="11" height="11" viewBox="0 0 11 11"><path d="M0 0 L11 11 M11 0 L0 11" stroke="#000" stroke-width="1.1"/></svg>
<svg style="left:4px;top:3px;" width="13" height="16" viewBox="0 0 13 16"><rect x="1" y="1" width="11" height="14" rx="2" fill="#2858e0" transform="skewX(-6) translate(1.5,0)"/><path d="M1 1 H10 L12 5 L6 5 Z" fill="#e02020" transform="skewX(-6) translate(1.5,0)"/><path d="M3 4 H10 L5.5 11 H10 V13 H2.5 L7 6 H3 Z" fill="#fff"/></svg>
<div style="left:143px;top:50px;width:18px;height:131px;background:linear-gradient(90deg,#2f3a50,#26282c 70%);"></div>
<div style="left:144px;top:53px;width:15px;height:15px;border:1px solid #0f1116;border-radius:3px;background:linear-gradient(#5a6a8a,#2c3446 50%,#1c2029 52%,#262c3a);box-shadow:inset 0 0 0 1px #7a8cb4;"></div>
<svg style="left:147px;top:56px;" width="9" height="9" viewBox="0 0 9 9"><path d="M0.5 0.5 L8.5 8.5 M8.5 0.5 L0.5 8.5" stroke="#fff" stroke-width="1.4"/></svg>
<div style="left:144px;top:73px;width:15px;height:14px;border:1px solid #0f1116;border-radius:3px;background:linear-gradient(#5a6a8a,#2c3446 50%,#1c2029 52%,#262c3a);box-shadow:inset 0 0 0 1px #7a8cb4;"></div>
<svg style="left:147px;top:76px;" width="9" height="9" viewBox="0 0 9 9"><path d="M2.5 0.5 H6.5 V4.5 H2.5 Z M1 4.5 H8 M4.5 4.5 V8.5" stroke="#fff" stroke-width="1.1" fill="none"/><path d="M5.5 1 V4" stroke="#fff" stroke-width="1"/></svg>
<div class="t" style="left:158.5px;top:90px;transform-origin:0 0;transform:rotate(90deg) scaleX(1.0195);font-size:12px;color:#fff;">Commands Bar</div>
<div style="left:161px;top:50.5px;width:151px;height:17.5px;background:linear-gradient(#5a6c92,#475a80 48%,#38466a 52%,#3e4c6e);border-bottom:1px solid #d89a28;border-radius:0 0 3px 0;"></div>
<div class="ts" style="left:165px;top:52px;font-size:11px;line-height:13.0px;transform-origin:0 0;transform:scaleX(1.1085);">Left button:</div>
<svg style="left:238px;top:58px;" width="5" height="3" viewBox="0 0 5 3"><path d="M0 0 H5 L2.5 3 Z" fill="#e8ecf4"/></svg>
<div style="left:250px;top:50.5px;width:61px;height:17.5px;background:linear-gradient(#e8a828,#f6c458 45%,#f0a818 55%,#f8bc38);border:1px solid #8a5a08;border-top:0;border-radius:0 0 3px 0;"></div>
<svg style="left:256px;top:51px;" width="15" height="15" viewBox="0 0 32 32"><path fill-rule="evenodd" fill="url(#gGreen2)" stroke="#0a6a1a" stroke-width=".6" d="M16 0.3 L31.7 16 L16 31.7 L0.3 16 Z M8.3 8.3 h4.6 v4.6 h-4.6 Z M19.1 8.3 h4.6 v4.6 h-4.6 Z M8.3 19.1 h4.6 v4.6 h-4.6 Z M19.1 19.1 h4.6 v4.6 h-4.6 Z"/></svg>
<div class="t" style="left:279px;top:52px;font-size:11px;line-height:13.0px;transform-origin:0 0;transform:scaleX(1.0038);color:#2a2208;">Move</div>
<div style="left:326px;top:53px;width:57px;height:19px;background:linear-gradient(#4c5a76 0,#3a4458 50%,#272b34 52%,#23262d 100%);border:1px solid #3c4860;border-bottom:0;border-radius:3px 3px 0 0;"></div>
<div class="ts" style="left:338px;top:57px;font-size:11px;line-height:13.0px;transform-origin:0 0;transform:scaleX(0.9995);">Create</div>
<div style="left:383px;top:53px;width:61px;height:19px;background:linear-gradient(#4c5a76 0,#3a4458 50%,#272b34 52%,#23262d 100%);border:1px solid #3c4860;border-bottom:0;border-radius:3px 3px 0 0;"></div>
<div class="ts" style="left:395px;top:57px;font-size:11px;line-height:13.0px;transform-origin:0 0;transform:scaleX(1.0258);">Display</div>
<div style="left:505px;top:53px;width:63px;height:19px;background:linear-gradient(#4c5a76 0,#3a4458 50%,#272b34 52%,#23262d 100%);border:1px solid #3c4860;border-bottom:0;border-radius:3px 3px 0 0;"></div>
<div class="ts" style="left:516px;top:57px;font-size:11px;line-height:13.0px;transform-origin:0 0;transform:scaleX(1.0991);">Rigging</div>
<div style="left:568px;top:53px;width:56px;height:19px;background:linear-gradient(#4c5a76 0,#3a4458 50%,#272b34 52%,#23262d 100%);border:1px solid #3c4860;border-bottom:0;border-radius:3px 3px 0 0;"></div>
<div class="ts" style="left:581px;top:57px;font-size:11px;line-height:13.0px;transform-origin:0 0;transform:scaleX(0.9813);">Select</div>
<div style="left:624px;top:53px;width:62px;height:19px;background:linear-gradient(#4c5a76 0,#3a4458 50%,#272b34 52%,#23262d 100%);border:1px solid #3c4860;border-bottom:0;border-radius:3px 3px 0 0;"></div>
<div class="ts" style="left:635px;top:57px;font-size:11px;line-height:13.0px;transform-origin:0 0;transform:scaleX(1.0025);">Surface</div>
<div style="left:444px;top:51px;width:61px;height:22px;background:linear-gradient(#62739a 0,#4a5874 50%,#3c4558 52%,#363e50 100%);border:1px solid #5a6a8c;border-bottom:0;border-radius:3px 3px 0 0;"></div>
<div class="ts" style="left:456px;top:56px;font-size:11px;line-height:13.0px;transform-origin:0 0;transform:scaleX(1.1420);">Modify</div>
<div style="left:167px;top:72px;width:1444px;height:100px;border:1px solid #38445c;background:#262626;box-shadow:0 0 0 1px #15171b;"></div>
<div style="left:1474px;top:50.5px;width:66px;height:17.5px;background:linear-gradient(#e8a828,#f6c458 45%,#f0a818 55%,#f8bc38);border:1px solid #8a5a08;border-top:0;border-radius:0 0 0 3px;"></div>
<div style="left:1540px;top:50.5px;width:76px;height:17.5px;background:linear-gradient(#5a6c92,#475a80 48%,#38466a 52%,#3e4c6e);border-bottom:1px solid #d89a28;"></div>
<svg style="left:1481px;top:51px;" width="15" height="15" viewBox="0 0 15 15"><path d="M1 10 L9 1 L14 3 L6 13 Z" fill="#5a78e8" stroke="#2a2a90" stroke-width=".8"/><path d="M3 8 L11 3 M5 11 L12 5" stroke="#e8a0a0" stroke-width="1.2"/><path d="M5 9 L13 11 L8 15 Z" fill="#e03030"/><path d="M0 3 L6 1 L7 5 L1 7 Z" fill="#e8e8f8"/></svg>
<div class="t" style="left:1504px;top:52px;font-size:11px;line-height:13.0px;transform-origin:0 0;transform:scaleX(1.0141);color:#2a2208;">Quadr</div>
<div class="ts" style="left:1542px;top:52px;font-size:11px;line-height:13.0px;transform-origin:0 0;transform:scaleX(1.1224);">:Right button</div>
<div class="cbtn" style="left:171px;top:76.5px;width:62px;height:60.5px;"></div>
<svg style="left:186.0px;top:84px;" width="32" height="32" viewBox="0 0 32 32"><g transform="translate(0,-1.5) scale(1,1.1)"><g fill="none" stroke="#0a2a70" stroke-width="1"><path d="M3 5 V2 H6 M12 2 H15 V5"/><path d="M17 5 V2 H20 M26 2 H29 V5"/><path d="M3 26 V29 H6 M12 29 H15 V26"/><path d="M17 26 V29 H20 M26 29 H29 V26"/></g><path d="M5 4 L12 3 L13 12 L6 13 Z" fill="url(#gLB)"/><path d="M5 21 L12 20 L13 29 L6 29 Z" fill="url(#gLB)"/><path d="M20 21 L27 20 L25 29 L19 28 Z" fill="url(#gLB)"/><path d="M21 3 L28 2 L27 10 L20 11 Z" fill="#e01030"/><path d="M20 11 L27 10 L25 14 L20 14 Z" fill="#f05088"/><path d="M13 7 L19.5 7 L19.5 14 L23.5 14 L16 26 L8.5 14 L13 14 Z" fill="#2da83a" stroke="#0d6a1a" stroke-width=".8"/></g></svg>
<div class="ts" style="left:185px;top:123px;font-size:10.5px;line-height:12.5px;transform-origin:0 0;transform:scaleX(1.1085);">Attach</div>
<div class="pop" style="left:219px;top:78px;width:12px;height:12px;"><svg width="10" height="10" viewBox="0 0 10 10" style="left:0;top:0"><path d="M2.5 6.5 V2.5 H6.5" fill="none" stroke="#e8eefc" stroke-width="1"/><path d="M5 5 L8.5 8.5 M8.5 5.5 V8.5 H5.5" fill="none" stroke="#e8eefc" stroke-width="1"/></svg></div>
<div class="cbtn" style="left:237px;top:76.5px;width:40px;height:60.5px;"></div>
<svg style="left:241.0px;top:84px;" width="32" height="32" viewBox="0 0 32 32"><path d="M5 4 L15 4 L12 18 L2 18 Z" fill="#bfe0ff"/><path d="M2 18 L12 18 L11 28 L0 28 Z" fill="#2a80dc"/><path d="M20 4 L31 4 L28 18 L17 18 Z" fill="#9fd0fa"/><path d="M17 18 L28 18 L26 28 L15 28 Z" fill="#4a9ae8"/><path d="M25 4 L22 28" stroke="#d8ecff" stroke-width="1"/><circle cx="15" cy="3" r="1.6" fill="#f01010"/><circle cx="20" cy="3" r="1.6" fill="#f01010"/><path d="M13 5 L7 12" stroke="#22a030" stroke-width="3.4"/><path d="M0 16 L3 7 L11 14 Z" fill="#22a030"/></svg>
<div class="ts" style="left:243.5px;top:123px;font-size:10.5px;line-height:12.5px;transform-origin:0 0;transform:scaleX(1.0208);">Break</div>
<div class="cbtn" style="left:281px;top:76.5px;width:62px;height:60.5px;"></div>
<svg style="left:296.0px;top:84px;" width="32" height="32" viewBox="0 0 32 32"><ellipse cx="20" cy="28" rx="9" ry="3" fill="#6a6e76" opacity=".6"/><path d="M3.5 4 L28.5 4 L25 27 Q16 32 7.5 27 Z" fill="#8fa4c4" fill-opacity=".55"/><path d="M3.5 4 L28.5 4 L25 27 Q16 32 7.5 27 Z" fill="none" stroke="#b8c0cc" stroke-opacity=".5" stroke-width=".8"/><ellipse cx="16" cy="26" rx="9" ry="4" fill="#e6e8ec"/><ellipse cx="16" cy="4" rx="12.5" ry="3.6" fill="#9fb0c8" fill-opacity=".5" stroke="#c4c8d0" stroke-width="1.3"/><path d="M12 13 l3 -1 l2 3 M10 18 l-1 3 l3 2 M19 17 l3 1 l-1 4 l-4 1" fill="none" stroke="#2a78f0" stroke-width="2.2"/></svg>
<div class="ts" style="left:295.3px;top:123px;font-size:10.5px;line-height:12.5px;transform-origin:0 0;transform:scaleX(1.0774);">Delete</div>
<div class="pop" style="left:329px;top:78px;width:12px;height:12px;"><svg width="10" height="10" viewBox="0 0 10 10" style="left:0;top:0"><path d="M2.5 6.5 V2.5 H6.5" fill="none" stroke="#e8eefc" stroke-width="1"/><path d="M5 5 L8.5 8.5 M8.5 5.5 V8.5 H5.5" fill="none" stroke="#e8eefc" stroke-width="1"/></svg></div>
<div class="cbtny" style="left:347px;top:76.5px;width:40px;height:60.5px;"></div>
<svg style="left:351.0px;top:84px;" width="32" height="32" viewBox="0 0 32 32"><path d="M3 9 L17 2 L30 8 L28 24 L15 31 L4 24 Z" fill="#3a6088" stroke="#1a3050" stroke-width="1"/><path d="M3 9 L15 14 L15 31 L4 24 Z" fill="#2a4a6c"/><path d="M15 14 L30 8 L28 24 L15 31 Z" fill="#8fc0e8" opacity=".9"/><path d="M3 9 L17 2 L30 8 L15 14 Z" fill="#5a88b0"/><path d="M17 2 L18 18 L4 24 M18 18 L28 24" stroke="#c8e0f8" stroke-width=".9" fill="none"/></svg>
<div class="t" style="left:357.5px;top:123px;font-size:10.5px;line-height:12.5px;transform-origin:0 0;transform:scaleX(1.0935);color:#2a2208;">Flip</div>
<div class="cbtn" style="left:391px;top:76.5px;width:40px;height:60.5px;"></div>
<svg style="left:395.0px;top:84px;" width="32" height="32" viewBox="0 0 32 32"><path d="M1 8 L11 5 L21 5 L30 8 L29 28 L20 30 L10 30 L2 27 Z" fill="url(#gLB)"/><path d="M11 5 L10 30 M21 5 L20 30 M1.5 15 L29.5 15 M2 22 L29 22" stroke="#d8ecff" stroke-width="1.2" fill="none"/><path d="M2 8 L12 31" stroke="#e02020" stroke-width="1.3" fill="none"/><path d="M8 22 L24 3 L29 7 L13 25 Z" fill="#e82020" stroke="#8a0808" stroke-width=".6"/><path d="M10 21 L25 4" stroke="#fff" stroke-width="1.5"/><path d="M15 14 L20 9" stroke="#222" stroke-width="2"/><path d="M8 22 L13 25 L6 28 Z" fill="#d8d8e0"/></svg>
<div class="ts" style="left:396px;top:123px;font-size:10.5px;line-height:12.5px;transform-origin:0 0;transform:scaleX(1.1043);">Insert</div>
<div class="pop" style="left:417px;top:78px;width:12px;height:12px;"><svg width="10" height="10" viewBox="0 0 10 10" style="left:0;top:0"><path d="M2.5 6.5 V2.5 H6.5" fill="none" stroke="#e8eefc" stroke-width="1"/><path d="M5 5 L8.5 8.5 M8.5 5.5 V8.5 H5.5" fill="none" stroke="#e8eefc" stroke-width="1"/></svg></div>
<div class="cbtn" style="left:435px;top:76.5px;width:40px;height:60.5px;"></div>
<svg style="left:439.0px;top:84px;" width="32" height="32" viewBox="0 0 32 32"><path d="M11.5 1.3 L1.5 14.75 L7.4 15 L0.9 24.75 L11.5 31 Z" fill="url(#gMirL)"/><path d="M20.9 1.3 L30.9 14.75 L24.9 15 L31.2 24.75 L20.9 31 Z" fill="url(#gMirR)"/><path d="M16.2 0 V32" stroke="#0a0a64" stroke-width="2.2"/></svg>
<div class="ts" style="left:439.3px;top:123px;font-size:10.5px;line-height:12.5px;transform-origin:0 0;transform:scaleX(1.1567);">Mirror</div>
<div class="pop" style="left:461px;top:78px;width:12px;height:12px;"><svg width="10" height="10" viewBox="0 0 10 10" style="left:0;top:0"><path d="M2.5 6.5 V2.5 H6.5" fill="none" stroke="#e8eefc" stroke-width="1"/><path d="M5 5 L8.5 8.5 M8.5 5.5 V8.5 H5.5" fill="none" stroke="#e8eefc" stroke-width="1"/></svg></div>
<div class="btny" style="left:479px;top:76.5px;width:40px;height:60.5px;"></div>
<svg style="left:483.0px;top:84px;" width="32" height="32" viewBox="0 0 32 32"><path fill-rule="evenodd" fill="url(#gGreen2)" stroke="#0a6a1a" stroke-width=".6" d="M16 0.3 L31.7 16 L16 31.7 L0.3 16 Z M8.3 8.3 h4.6 v4.6 h-4.6 Z M19.1 8.3 h4.6 v4.6 h-4.6 Z M8.3 19.1 h4.6 v4.6 h-4.6 Z M19.1 19.1 h4.6 v4.6 h-4.6 Z"/></svg>
<div class="t" style="left:485.7px;top:123px;font-size:10.5px;line-height:12.5px;transform-origin:0 0;transform:scaleX(1.0516);color:#2a2208;">Move</div>
<div class="pop" style="left:505px;top:78px;width:12px;height:12px;"><svg width="10" height="10" viewBox="0 0 10 10" style="left:0;top:0"><path d="M2.5 6.5 V2.5 H6.5" fill="none" stroke="#e8eefc" stroke-width="1"/><path d="M5 5 L8.5 8.5 M8.5 5.5 V8.5 H5.5" fill="none" stroke="#e8eefc" stroke-width="1"/></svg></div>
<div class="cbtn" style="left:523px;top:76.5px;width:40px;height:60.5px;"></div>
<svg style="left:527.0px;top:84px;" width="32" height="32" viewBox="0 0 32 32"><path d="M28 13.5 A12 12 0 1 0 16 25.5" fill="none" stroke="url(#gBlue)" stroke-width="3.8"/><path d="M15.5 19 L24.5 25.2 L15.5 31.5 Z" fill="#1838e8"/></svg>
<div class="ts" style="left:527.3px;top:123px;font-size:10.5px;line-height:12.5px;transform-origin:0 0;transform:scaleX(1.0640);">Rot...</div>
<div class="pop" style="left:549px;top:78px;width:12px;height:12px;"><svg width="10" height="10" viewBox="0 0 10 10" style="left:0;top:0"><path d="M2.5 6.5 V2.5 H6.5" fill="none" stroke="#e8eefc" stroke-width="1"/><path d="M5 5 L8.5 8.5 M8.5 5.5 V8.5 H5.5" fill="none" stroke="#e8eefc" stroke-width="1"/></svg></div>
<div class="cbtn" style="left:567px;top:76.5px;width:40px;height:60.5px;"></div>
<svg style="left:571.0px;top:84px;" width="32" height="32" viewBox="0 0 32 32"><rect x="1" y="4" width="30.5" height="26" fill="#9db8dc" stroke="#c4d8ee" stroke-width="1"/><path d="M6.8 17 V11" stroke="#1030d8" stroke-width="3"/><path d="M2.5 12 L6.8 6 L11.1 12 Z" fill="#1030d8"/><path d="M15 23.5 H21" stroke="#1030d8" stroke-width="3"/><path d="M20.3 19 L26.2 23.5 L20.3 28 Z" fill="#1030d8"/><rect x="0.8" y="16.8" width="13.8" height="13" fill="url(#gRedBox)" stroke="#e01010" stroke-width="1.2"/></svg>
<div class="ts" style="left:574.3px;top:123px;font-size:10.5px;line-height:12.5px;transform-origin:0 0;transform:scaleX(0.9785);">Scale</div>
<div style="left:610px;top:76px;width:416px;height:62px;border:1px solid #4a587a;border-radius:3px;background:linear-gradient(#7486ae 0,#566894 15px,#2f3646 15.5px,#25282f 100%);"></div>
<svg style="left:615px;top:81px;" width="9" height="5" viewBox="0 0 9 5"><path d="M0 5 L4.5 0 L9 5 Z" fill="#fff"/></svg>
<div class="ts" style="left:797px;top:78px;font-size:11px;line-height:13.0px;transform-origin:0 0;transform:scaleX(0.9886);">Submesh...</div>
<div class="cbtn" style="left:616px;top:94px;width:40px;height:39px;"></div>
<svg style="left:620px;top:98px;" width="32" height="32" viewBox="0 0 32 32"><path d="M20 9 L31 4 Q32 12 31 21 L22 31 Z" fill="#1a5fb4"/><path d="M1 11 Q1 8 4 8 L20 9 L22 31 L4 26 Q1 25 1 22 Z" fill="url(#gLB)"/><path d="M4 8 Q8 2 12 1 L28 3 Q31 3 31 4 L20 9 Z" fill="#b4dcff"/><path d="M6 8.5 L9.5 8.7 L10.5 28 L7 27 Z" fill="#e0f2ff" opacity=".7"/></svg>
<div class="cbtn" style="left:660px;top:94px;width:40px;height:39px;"></div>
<svg style="left:664px;top:98px;" width="32" height="32" viewBox="0 0 32 32"><path d="M8 6 L20 3 L29 10 L26 24 L12 27 L5 17 Z" fill="url(#gLB)"/><path d="M20 3 L17 15 L5 17 M17 15 L26 24" stroke="#e0f0ff" stroke-width="1" fill="none"/><path d="M12 17 Q22 14 29 3 L31 5 Q25 17 15 21 Z" fill="#c08c48"/><path d="M1 21 Q8 14 14 17 L21 25 L10 32 L0 30 Z" fill="#ecd8a0" stroke="#a87838" stroke-width=".7"/><path d="M3 30 L8 20 M7 31 L12 21 M11 30 L16 23" stroke="#b89858" stroke-width=".8"/><circle cx="8" cy="6" r="1.1" fill="#e01010"/><circle cx="20" cy="3" r="1.1" fill="#e01010"/><circle cx="29" cy="10" r="1.1" fill="#e01010"/><circle cx="26" cy="24" r="1.1" fill="#e01010"/></svg>
<div class="cbtn" style="left:704px;top:94px;width:40px;height:39px;"></div>
<svg style="left:708px;top:98px;" width="32" height="32" viewBox="0 0 32 32"><path d="M8 3 L20 1 L22 10 L10 13 Z M22 2 L31 4 L30 12 L23 11 Z M12 15 L21 13 L22 22 L13 24 Z M23 14 L31 14 L31 27 L23 26 Z" fill="url(#gLB)"/><path d="M8 3 L22 10" stroke="#e0f0ff" stroke-width="1"/><path d="M8 10 L8 20 L3 20 L11 30 L17 21 L12 21 L12 10 Z" fill="#e83020"/><circle cx="27" cy="20" r="1.2" fill="#e01010"/><circle cx="17" cy="18" r="1.2" fill="#e01010"/></svg>
<div class="pop" style="left:730px;top:96px;width:12px;height:12px;"><svg width="10" height="10" viewBox="0 0 10 10" style="left:0;top:0"><path d="M2.5 6.5 V2.5 H6.5" fill="none" stroke="#e8eefc" stroke-width="1"/><path d="M5 5 L8.5 8.5 M8.5 5.5 V8.5 H5.5" fill="none" stroke="#e8eefc" stroke-width="1"/></svg></div>
<div class="cbtn" style="left:748px;top:94px;width:40px;height:39px;"></div>
<svg style="left:752px;top:98px;" width="32" height="32" viewBox="0 0 32 32"><path d="M3 3 L10 2 L11 10 L4 11 Z M12 2 L19 2 L19 10 L12 10 Z M21 2 L27 3 L26 11 L20 10 Z M3 13 L10 12 L10 20 L4 21 Z M4 23 L10 22 L11 29 L5 28 Z" fill="url(#gLB)"/><path d="M13 13 L23 11 L26 20 L22 27 L13 28 Z" fill="#e02020"/><path d="M13 13 L23 11 L21 18 L14 19 Z" fill="#f06060"/><path d="M20 21 L27 26" stroke="#1030d0" stroke-width="3"/><path d="M29 22 L32 30 L23 29 Z" fill="#1030d0"/></svg>
<div class="pop" style="left:774px;top:96px;width:12px;height:12px;"><svg width="10" height="10" viewBox="0 0 10 10" style="left:0;top:0"><path d="M2.5 6.5 V2.5 H6.5" fill="none" stroke="#e8eefc" stroke-width="1"/><path d="M5 5 L8.5 8.5 M8.5 5.5 V8.5 H5.5" fill="none" stroke="#e8eefc" stroke-width="1"/></svg></div>
<div class="cbtn" style="left:792px;top:94px;width:40px;height:39px;"></div>
<svg style="left:796px;top:98px;" width="32" height="32" viewBox="0 0 32 32"><path d="M2 18 L14 13 L30 17 L18 23 Z" fill="#7cc0f4"/><path d="M2 18 L18 23 L18 31 L2 26 Z" fill="#2a80dc"/><path d="M18 23 L30 17 L30 25 L18 31 Z" fill="#1a62b8"/><path d="M10 20.5 L10 28.5 M24 20 L24 28" stroke="#bfe0ff" stroke-width=".8"/><path d="M2 12 L9 9 L15 11 L8 14 Z" fill="#ff9a90"/><path d="M2 12 L8 14 L8 20 L2 18 Z" fill="#e82828"/><path d="M8 14 L15 11 L15 17 L8 20 Z" fill="#b81818"/><path d="M8 11 V5" stroke="#1030d0" stroke-width="3.2"/><path d="M2.5 6 L8 0 L13.5 6 Z" fill="#1030d0"/></svg>
<div class="pop" style="left:818px;top:96px;width:12px;height:12px;"><svg width="10" height="10" viewBox="0 0 10 10" style="left:0;top:0"><path d="M2.5 6.5 V2.5 H6.5" fill="none" stroke="#e8eefc" stroke-width="1"/><path d="M5 5 L8.5 8.5 M8.5 5.5 V8.5 H5.5" fill="none" stroke="#e8eefc" stroke-width="1"/></svg></div>
<div class="cbtn" style="left:836px;top:94px;width:40px;height:39px;"></div>
<svg style="left:840px;top:98px;" width="32" height="32" viewBox="0 0 32 32"><path d="M1 8 L11 5 L21 5 L30 8 L29 28 L20 30 L10 30 L2 27 Z" fill="url(#gLB)"/><path d="M11 5 L10 30 M21 5 L20 30 M1.5 15 L29.5 15 M2 22 L29 22" stroke="#d8ecff" stroke-width="1.2" fill="none"/><path d="M2 23 L12 20 L20 22" stroke="#e02020" stroke-width="1.2" fill="none"/><path d="M8 22 L24 3 L29 7 L13 25 Z" fill="#e82020" stroke="#8a0808" stroke-width=".6"/><path d="M10 21 L25 4" stroke="#fff" stroke-width="1.5"/><path d="M15 14 L20 9" stroke="#222" stroke-width="2"/><path d="M8 22 L13 25 L6 28 Z" fill="#d8d8e0"/></svg>
<div class="pop" style="left:862px;top:96px;width:12px;height:12px;"><svg width="10" height="10" viewBox="0 0 10 10" style="left:0;top:0"><path d="M2.5 6.5 V2.5 H6.5" fill="none" stroke="#e8eefc" stroke-width="1"/><path d="M5 5 L8.5 8.5 M8.5 5.5 V8.5 H5.5" fill="none" stroke="#e8eefc" stroke-width="1"/></svg></div>
<div class="cbtn" style="left:880px;top:94px;width:40px;height:39px;"></div>
<svg style="left:884px;top:98px;" width="32" height="32" viewBox="0 0 32 32"><path d="M2 4 Q16 0 30 4 Q33 16 30 28 Q16 32 2 28 Q-1 16 2 4 Z" fill="#3a90e8"/><path d="M2 4 L9 9 L16 2 L23 9 L30 4 M2 28 L9 23 L16 30 L23 23 L30 28 M2 4 L9 9 L1 16 L9 23 L2 28 M30 4 L23 9 L31 16 L23 23 L30 28" stroke="#0a4090" stroke-width=".8" fill="none"/><path d="M9 9 L23 9 L23 23 L9 23 Z" fill="#f04040" stroke="#b01010" stroke-width=".8"/><path d="M23 9 L9 23" stroke="#b01010" stroke-width=".8"/></svg>
<div class="cbtn" style="left:924px;top:94px;width:40px;height:39px;"></div>
<svg style="left:928px;top:98px;" width="32" height="32" viewBox="0 0 32 32"><path d="M2 20 L10 24 L22 24 L30 20 L30 27 L22 31 L10 31 L2 27 Z" fill="#c8a030" stroke="#7a5a08" stroke-width=".8"/><path d="M8 6 L20 3 L28 7 L28 20 L17 25 L8 21 Z" fill="#5aa8f0"/><path d="M8 6 L17 10 L17 25 L8 21 Z" fill="#9fd0fa"/><path d="M8 6 L20 3 L28 7 L17 10 Z" fill="#d0e8ff"/><path d="M8 21 L17 25 L28 20" stroke="#e02020" stroke-width="1.6" fill="none"/></svg>
<div class="pop" style="left:950px;top:96px;width:12px;height:12px;"><svg width="10" height="10" viewBox="0 0 10 10" style="left:0;top:0"><path d="M2.5 6.5 V2.5 H6.5" fill="none" stroke="#e8eefc" stroke-width="1"/><path d="M5 5 L8.5 8.5 M8.5 5.5 V8.5 H5.5" fill="none" stroke="#e8eefc" stroke-width="1"/></svg></div>
<div class="cbtn" style="left:968px;top:94px;width:40px;height:39px;"></div>
<svg style="left:972px;top:98px;" width="32" height="32" viewBox="0 0 32 32"><path d="M2 2 L12 1 L13 9 L3 10 Z M14 1 L30 2 L29 9 L15 9 Z M2 12 L10 11 L9 30 L2 30 Z M11 11 L22 11 L21 19 L12 20 Z M23 11 L30 11 L30 30 L23 30 Z M11 22 L21 21 L21 30 L11 30 Z" fill="url(#gLB)"/><path d="M7 6 L13 12 M18 9 L22 12 M8 21 L12 22" stroke="#e020c0" stroke-width="1.6"/></svg>
<div class="pop" style="left:994px;top:96px;width:12px;height:12px;"><svg width="10" height="10" viewBox="0 0 10 10" style="left:0;top:0"><path d="M2.5 6.5 V2.5 H6.5" fill="none" stroke="#e8eefc" stroke-width="1"/><path d="M5 5 L8.5 8.5 M8.5 5.5 V8.5 H5.5" fill="none" stroke="#e8eefc" stroke-width="1"/></svg></div>
<div style="left:161px;top:173px;width:1455px;height:9px;background:#262627;"></div>
<div style="left:141px;top:182.5px;width:1475px;height:20.5px;background:linear-gradient(#5a7298 0,#4e6494 1.5px,#3e4e74 9.5px,#2a3244 10px,#262a34 18px,#1a1c22 19px);"></div>
<div style="left:143px;top:184px;width:21px;height:18px;border:1px solid #10131a;background:linear-gradient(#6a7fa8,#3a4868 50%,#222a3c 52%,#2c364c);box-shadow:inset 1px 1px 0 #9db0d8;"></div>
<div class="ts" style="left:146px;top:186px;font-size:12.5px;line-height:14.5px;transform-origin:0 0;transform:scaleX(1.0012);">3D</div>
<div style="left:168px;top:184px;width:1px;height:18px;background:#1a2030;"></div>
<div style="left:169px;top:184px;width:1px;height:18px;background:#6a7ea8;opacity:.6"></div>
<svg style="left:176px;top:189px;" width="5" height="8" viewBox="0 0 5 8"><path d="M5 0 L0 4 L5 8 Z" fill="#fff"/></svg>
<div class="ts" style="left:192px;top:186px;font-size:11px;line-height:13.0px;transform-origin:0 0;transform:scaleX(1.0724);">Tripod</div>
<div class="ts" style="left:235px;top:186px;font-size:11px;line-height:13.0px;transform-origin:0 0;transform:scaleX(1.0795);">Image</div>
<div class="ts" style="left:278px;top:186px;font-size:11px;line-height:13.0px;transform-origin:0 0;transform:scaleX(1.1031);">Color</div>
<div class="ts" style="left:317px;top:186px;font-size:11px;line-height:13.0px;transform-origin:0 0;transform:scaleX(1.0586);">Grid</div>
<div class="ts" style="left:349px;top:186px;font-size:11px;line-height:13.0px;transform-origin:0 0;transform:scaleX(1.1042);">Pivot</div>
<div style="left:1333px;top:185px;width:115px;height:17px;border:1px solid #141823;background:linear-gradient(#6a80aa,#46587e 48%,#1e2636 52%,#2c3850);box-shadow:inset 1px 1px 0 rgba(170,190,230,.5);"></div>
<svg style="left:1340px;top:187px;" width="12" height="13" viewBox="0 0 12 13"><path d="M4 1 L11 0 Q12 5 9 11 L1 12 Q4 6 4 1 Z" fill="url(#gLB)"/></svg>
<svg style="left:1356px;top:187px;" width="12" height="13" viewBox="0 0 12 13"><path d="M1 11 L10 2" stroke="#e040e0" stroke-width="2"/><circle cx="1.5" cy="11" r="1.5" fill="#a020c0"/><circle cx="10" cy="2" r="1.8" fill="#f0a0f0"/></svg>
<svg style="left:1373px;top:187px;" width="12" height="13" viewBox="0 0 12 13"><path d="M0 9 L5 1 L11 3 L11 10 L4 12 Z" fill="#3a88e8"/><path d="M5 1 L11 3 L9 6 L3 5 Z" fill="#e02020"/><path d="M0 9 L3 5 L9 6 L4 12 Z" fill="#a8d0f8"/></svg>
<svg style="left:1388px;top:187px;" width="12" height="13" viewBox="0 0 12 13"><rect x="0" y="0" width="12" height="12" fill="#f4f0ff" stroke="#fff" stroke-width="1"/><path d="M0 0 H4 V4 H0 Z M8 0 H12 V4 H8 Z M4 4 H8 V8 H4 Z M0 8 H4 V12 H0 Z M8 8 H12 V12 H8 Z" fill="#30208a"/><path d="M4 0 H8 V4 H4 Z M0 4 H4 V8 H0 Z M8 4 H12 V8 H8 Z M4 8 H8 V12 H4 Z" fill="#f0c860"/></svg>
<svg style="left:1405px;top:187px;" width="12" height="13" viewBox="0 0 12 13"><path d="M0 5 H11 V12 H0 Z" fill="#2a2a2a"/><path d="M0 3 L10 0 L11 2 L1 5 Z" fill="#444"/><path d="M2 2.6 L3 4.3 M5 1.7 L6 3.4 M8 .8 L9 2.5" stroke="#ddd" stroke-width="1"/></svg>
<svg style="left:1422px;top:187px;" width="9" height="13" viewBox="0 0 9 13"><circle cx="4.5" cy="4.5" r="4.2" fill="#f4f090"/><path d="M2.5 8 H6.5 V11 H2.5 Z" fill="#c8c8a0"/><circle cx="3.5" cy="3.5" r="1.5" fill="#fffff0"/></svg>
<svg style="left:1438px;top:192px;" width="6" height="4" viewBox="0 0 6 4"><path d="M0 0 H6 L3 4 Z" fill="#e8ecf4"/></svg>
<div style="left:1453px;top:185px;width:53px;height:17px;border:1px solid #0c0e13;background:linear-gradient(#1c2230,#10131a 50%,#0c0e12 52%,#171b25);box-shadow:inset 0 1px 0 rgba(120,140,180,.35),0 0 0 1px rgba(90,110,150,.35);"></div>
<div style="left:1508px;top:185px;width:43px;height:17px;border:1px solid #0c0e13;background:linear-gradient(#1c2230,#10131a 50%,#0c0e12 52%,#171b25);box-shadow:inset 0 1px 0 rgba(120,140,180,.35),0 0 0 1px rgba(90,110,150,.35);"></div>
<div style="left:1553px;top:185px;width:36px;height:17px;border:1px solid #0c0e13;background:linear-gradient(#1c2230,#10131a 50%,#0c0e12 52%,#171b25);box-shadow:inset 0 1px 0 rgba(120,140,180,.35),0 0 0 1px rgba(90,110,150,.35);"></div>
<svg style="left:1457px;top:187px;" width="13" height="13" viewBox="0 0 13 13"><circle cx="5" cy="4.5" r="4" fill="#dff0ff" stroke="#8aa0c0" stroke-width="1"/><path d="M8 7.5 L12 12" stroke="#c07838" stroke-width="2.2"/></svg>
<div class="ts" style="left:1475px;top:186px;font-size:11px;line-height:13.0px;transform-origin:0 0;transform:scaleX(1.0314);">Zoom</div>
<svg style="left:1511px;top:187px;" width="13" height="13" viewBox="0 0 13 13"><path d="M3 12 L1 7 L2 5 L3.5 7 L3.5 1.5 L5 1 L5.5 5 L6 0.5 L7.5 0.5 L7.5 5 L8.5 1.5 L10 2 L9.5 6 L11 4 L12 5 L10 10 L9 12 Z" fill="#e8f2ff" stroke="#8aa8d8" stroke-width=".5"/></svg>
<div class="ts" style="left:1529px;top:186px;font-size:11px;line-height:13.0px;transform-origin:0 0;transform:scaleX(0.9709);">Pan</div>
<svg style="left:1554px;top:187px;" width="13" height="13" viewBox="0 0 13 13"><path d="M1 3 V1 H3 M9 1 H11 V3 M1 10 V12 H3 M9 12 H11 V10" stroke="#000" stroke-width="1" fill="none"/><rect x="3" y="4" width="8" height="8" fill="#b8e898"/><circle cx="3.5" cy="4.5" r="2.8" fill="#a02038"/></svg>
<div class="ts" style="left:1573px;top:186px;font-size:11px;line-height:13.0px;transform-origin:0 0;transform:scaleX(1.0639);">Fit</div>
<div style="left:1594px;top:184px;width:20px;height:18px;border:1px solid #10131a;background:linear-gradient(#6a7fa8,#3a4868 50%,#1c2332 52%,#2c364c);box-shadow:inset 1px 1px 0 #8da0c8;"></div>
<svg style="left:1599px;top:191px;" width="9" height="5" viewBox="0 0 9 5"><path d="M0 0 H9 L4.5 5 Z" fill="#fff"/></svg>
<div style="left:1620px;top:50px;width:300px;height:896px;background:#262627;"></div>
<div style="left:1620px;top:51px;width:300px;height:20px;background:linear-gradient(#48566e 0,#3a4458 10px,#262a30 10.5px,#222326 100%);border-radius:3px 0 0 0;"></div>
<div class="ts" style="left:1625px;top:54px;font-size:11.5px;line-height:13.5px;transform-origin:0 0;transform:scaleX(0.9890);">Scene nodes browser</div>
<div style="left:1884px;top:52px;width:15px;height:15px;border:1px solid #0f1116;border-radius:3px;background:linear-gradient(#5a6a8a,#2c3446 50%,#1c2029 52%,#262c3a);box-shadow:inset 0 0 0 1px #7a8cb4;"></div>
<div style="left:1902px;top:52px;width:15px;height:15px;border:1px solid #0f1116;border-radius:3px;background:linear-gradient(#5a6a8a,#2c3446 50%,#1c2029 52%,#262c3a);box-shadow:inset 0 0 0 1px #7a8cb4;"></div>
<svg style="left:1887px;top:55px;" width="9" height="9" viewBox="0 0 9 9"><path d="M2.5 0.5 H6.5 V4.5 H2.5 Z M1 4.5 H8 M4.5 4.5 V8.5" stroke="#fff" stroke-width="1.1" fill="none"/><path d="M5.5 1 V4" stroke="#fff" stroke-width="1"/></svg>
<svg style="left:1905px;top:55px;" width="9" height="9" viewBox="0 0 9 9"><path d="M0.5 0.5 L8.5 8.5 M8.5 0.5 L0.5 8.5" stroke="#fff" stroke-width="1.4"/></svg>
<div style="left:1620px;top:71px;width:300px;height:22px;background:linear-gradient(90deg,#3a4a6c,#3d4e74);border-left:1px solid #20283a;"></div>
<div style="left:1620px;top:71px;width:300px;height:486px;border:1px solid #1a2030;border-top:0;background:linear-gradient(90deg,#2e3a50 0,#364258 2%,#323c50 25%,#262a32 25.2%,#232425 100%);"></div>
<div style="left:1621px;top:70.5px;width:299px;height:22px;background:linear-gradient(#4e6596 0,#3c4a6c 16.5px,#232324 17px,#232324 100%);"></div>
<div style="left:1626px;top:73px;width:60px;height:19px;background:linear-gradient(#4a566e 0,#363e4e 42%,#262a30 44%,#222428 100%);border:1px solid #55658a;border-bottom:1px solid #15181f;border-radius:3px 3px 0 0;"></div>
<div class="ts" style="left:1632px;top:76px;font-size:11.5px;line-height:13.5px;transform-origin:0 0;transform:scaleX(0.9756);">Hierarchy</div>
<div style="left:1686px;top:73px;width:59px;height:19px;background:linear-gradient(#4a566e 0,#363e4e 42%,#262a30 44%,#222428 100%);border:1px solid #55658a;border-bottom:1px solid #15181f;border-radius:3px 3px 0 0;"></div>
<div class="ts" style="left:1692px;top:76px;font-size:11.5px;line-height:13.5px;transform-origin:0 0;transform:scaleX(1.0075);">Structure</div>
<div style="left:1745px;top:72px;width:65px;height:21px;background:linear-gradient(#5a6e98,#46587e 55%,#3a4a6c);border:1px solid #6a80ae;border-bottom:0;border-radius:3px 3px 0 0;"></div>
<div class="ts" style="left:1751px;top:75px;font-size:11.5px;line-height:13.5px;transform-origin:0 0;transform:scaleX(0.9922);">Properties</div>
<div style="left:1625px;top:92px;width:291px;height:460px;border:1px solid #34405a;border-left-color:#1a1e28;background:linear-gradient(90deg,#323c50 0,#353f54 24%,#232323 24.3%);"></div>
<div style="left:1629px;top:97px;width:282px;height:427px;border:1px solid #1b2232;background:linear-gradient(#c6c6c6 0,#c4c4c4 12%,#9e9e9e 100%);"></div>
<div style="left:1630px;top:98px;width:279px;height:24px;background:#fff;"></div>
<div style="left:1909px;top:98px;width:2px;height:24px;background:#1c2438;"></div>
<div style="left:1775px;top:98px;width:1px;height:24px;background:#d8d8d8;"></div>
<div style="left:1890px;top:98px;width:1px;height:24px;background:#e0e0e0;"></div>
<div class="t" style="left:1636px;top:103px;font-size:11.5px;line-height:13.5px;transform-origin:0 0;transform:scaleX(1.0585);color:#000;">Property</div>
<div class="t" style="left:1782px;top:103px;font-size:11.5px;line-height:13.5px;transform-origin:0 0;transform:scaleX(0.9804);color:#000;">Value</div>
<div style="left:1630px;top:122px;width:280px;height:20px;background:linear-gradient(#eeece6,#deddd8);"></div>
<div style="left:1769px;top:527.5px;width:141px;height:19px;border:1px solid #101216;border-radius:3px;background:linear-gradient(#56607a,#3e4554 48%,#25272c 52%,#2e3037);box-shadow:inset 0 0 0 1px rgba(90,106,140,.7);"></div>
<div class="t" style="left:1825px;top:531px;font-size:11.5px;line-height:13.5px;transform-origin:0 0;transform:scaleX(1.0081);color:#0a0c12;">Apply</div>
<div style="left:1620px;top:557px;width:300px;height:9px;background:#1b1d21;"></div>
<div style="left:1622px;top:559px;width:296px;height:4px;border:1px solid #3f507a;border-radius:2px;background:#2a3550;"></div>
<div style="left:1621px;top:566px;width:299px;height:354px;background:linear-gradient(#c8c8c8 0,#b8b8b8 45%,#a2a2a2 77%,#a3a3a3 100%);"></div>
<div style="left:1621px;top:566px;width:299px;height:20px;background:linear-gradient(#eeece6,#dddcd7);"></div>
<div style="left:1642px;top:570px;width:11px;height:11px;border:1px solid #6a6a6a;background:#f4f4f4;"></div>
<div style="left:1644px;top:572px;width:7px;height:7px;background:#7c7c7c;"></div>
<div class="t" style="left:1658px;top:569px;font-size:11.5px;line-height:13.5px;transform-origin:0 0;transform:scaleX(0.9156);color:#1a1a1a;">Base</div>
<div style="left:1642px;top:590px;width:11px;height:11px;border:1px solid #6a6a6a;background:#f4f4f4;"></div>
<div style="left:1644px;top:592px;width:7px;height:7px;background:#7c7c7c;"></div>
<div class="t" style="left:1658px;top:589px;font-size:11.5px;line-height:13.5px;transform-origin:0 0;transform:scaleX(0.9309);color:#1a1a1a;">Wire</div>
<div style="left:1642px;top:610px;width:11px;height:11px;border:1px solid #6a6a6a;background:#f4f4f4;"></div>
<div style="left:1644px;top:612px;width:7px;height:7px;background:#7c7c7c;"></div>
<div class="t" style="left:1658px;top:609px;font-size:11.5px;line-height:13.5px;transform-origin:0 0;transform:scaleX(0.9917);color:#1a1a1a;">Bracket1</div>
<div style="left:1642px;top:630px;width:11px;height:11px;border:1px solid #6a6a6a;background:#f4f4f4;"></div>
<div style="left:1644px;top:632px;width:7px;height:7px;background:#7c7c7c;"></div>
<div class="t" style="left:1658px;top:629px;font-size:11.5px;line-height:13.5px;transform-origin:0 0;transform:scaleX(0.9917);color:#1a1a1a;">Bracket2</div>
<div style="left:1621px;top:646px;width:296px;height:20px;border:1px solid #9a7a20;border-top-color:#d8c070;border-radius:2px;background:linear-gradient(#e9d590 0,#f2e2a8 35%,#e8cc70 52%,#deb030 58%,#e4bc48 100%);"></div>
<div style="left:1642px;top:650px;width:11px;height:11px;border:1px solid #7a7a7a;background:#fff;"></div>
<div class="t" style="left:1658px;top:649px;font-size:11.5px;line-height:13.5px;transform-origin:0 0;transform:scaleX(0.9521);color:#1a1a1a;">Blue1</div>
<div style="left:1621px;top:666px;width:296px;height:20px;border:1px solid #9a7a20;border-top-color:#d8c070;border-radius:2px;background:linear-gradient(#e9d590 0,#f2e2a8 35%,#e8cc70 52%,#deb030 58%,#e4bc48 100%);"></div>
<div style="left:1642px;top:670px;width:11px;height:11px;border:1px solid #7a7a7a;background:#fff;"></div>
<div class="t" style="left:1658px;top:669px;font-size:11.5px;line-height:13.5px;transform-origin:0 0;transform:scaleX(0.9861);color:#1a1a1a;">Blue2</div>
<div style="left:1621px;top:686px;width:296px;height:20px;border:1px solid #9a7a20;border-top-color:#d8c070;border-radius:2px;background:linear-gradient(#e9d590 0,#f2e2a8 35%,#e8cc70 52%,#deb030 58%,#e4bc48 100%);"></div>
<div style="left:1642px;top:690px;width:11px;height:11px;border:1px solid #7a7a7a;background:#fff;"></div>
<div class="t" style="left:1658px;top:689px;font-size:11.5px;line-height:13.5px;transform-origin:0 0;transform:scaleX(0.9459);color:#1a1a1a;">Red1</div>
<div style="left:1621px;top:706px;width:296px;height:20px;border:1px solid #9a7a20;border-top-color:#d8c070;border-radius:2px;background:linear-gradient(#e9d590 0,#f2e2a8 35%,#e8cc70 52%,#deb030 58%,#e4bc48 100%);"></div>
<div style="left:1642px;top:710px;width:11px;height:11px;border:1px solid #7a7a7a;background:#fff;"></div>
<div class="t" style="left:1658px;top:709px;font-size:11.5px;line-height:13.5px;transform-origin:0 0;transform:scaleX(0.9459);color:#1a1a1a;">Red2</div>
<div style="left:1620px;top:920px;width:300px;height:26px;border-top:1px solid #3d4c6e;border-left:1px solid #2a3550;background:#25272b;"></div>
<div style="left:1628px;top:922px;width:288px;height:22px;background:linear-gradient(#4c4c4f,#38383b 50%,#262628);border-radius:3px;"></div>
<svg style="left:1633px;top:924px;" width="15" height="16" viewBox="0 0 15 16"><path d="M2 3 L8 1 L12 3 L12 11 L7 14 L2 11 Z" fill="#1c56c0"/><path d="M2 3 L5 4.2 L5 13 L2 11 Z" fill="#9cc8ff"/><path d="M2 3 L8 1 L12 3 L7 5 Z" fill="#b8d8ff"/><path d="M1 13 L12 15" stroke="#c07838" stroke-width="2"/><rect x="11" y="12" width="4" height="3" fill="#dfe8ff"/></svg>
<div class="ts" style="left:1655px;top:925px;font-size:11.5px;line-height:13.5px;transform-origin:0 0;transform:scaleX(1.0180);">Isolated</div>
<svg style="left:1705px;top:924px;" width="13" height="16" viewBox="0 0 13 16"><rect x="0" y="0" width="13" height="16" fill="#e4ebf8"/><rect x="1" y="2" width="4" height="4" fill="#fff" stroke="#446"/><rect x="1" y="10" width="4" height="4" fill="#fff" stroke="#446"/><path d="M2 4 L3 5 L4.5 2.5 M2 12 L3 13 L4.5 10.5" stroke="#224" stroke-width=".8" fill="none"/><rect x="7" y="0" width="6" height="16" fill="#a8b8d8" opacity=".6"/></svg>
<div class="ts" style="left:1725px;top:925px;font-size:11.5px;line-height:13.5px;transform-origin:0 0;transform:scaleX(1.0202);">Show All</div>
<svg style="left:1778px;top:924px;" width="14" height="16" viewBox="0 0 14 16"><rect x="0" y="0" width="14" height="16" fill="#dfe7f6"/><rect x="1.5" y="1.5" width="4" height="4" fill="#fff" stroke="#556"/><rect x="1.5" y="9.5" width="4" height="4" fill="#fff" stroke="#556"/><rect x="8" y="0" width="6" height="16" fill="#a8b8d8" opacity=".6"/></svg>
<svg style="left:1801px;top:924px;" width="14" height="16" viewBox="0 0 14 16"><rect x="0" y="0" width="14" height="16" fill="#dfe7f6"/><path d="M1 1.5 H13 M1 9 H13 M1 12 H13 M1 15 H13" stroke="#3a70d0" stroke-width="1.6"/><path d="M7 2 L11 6 H8.5 V9 H5.5 V6 H3 Z" fill="#f01818"/></svg>
<svg style="left:1824px;top:924px;" width="14" height="16" viewBox="0 0 14 16"><rect x="0" y="0" width="14" height="16" fill="#dfe7f6"/><path d="M1 1.5 H13 M1 4.5 H13 M1 7.5 H13 M1 15 H13" stroke="#8a94a8" stroke-width="1.6"/><path d="M7 14 L11 10 H8.5 V7 H5.5 V10 H3 Z" fill="#f01818"/></svg>
<svg style="left:1847px;top:924px;" width="14" height="16" viewBox="0 0 14 16"><rect x="0" y="0" width="14" height="16" fill="#dfe7f6"/><path d="M1 9 H11 M1 12 H11 M1 15 H11" stroke="#3a70d0" stroke-width="1.6"/><path d="M3 3 L7 0 V2 H13 V10 H10 V5 H7 V7 Z" fill="#f01818"/></svg>
<svg style="left:1869px;top:924px;" width="15" height="16" viewBox="0 0 15 16"><rect x="3" y="2" width="12" height="14" fill="#dfe7f6"/><path d="M5 5 H14 M5 8 H14 M5 11 H14 M5 14 H14" stroke="#6a90d0" stroke-width="1.6"/><rect x="0" y="0" width="6" height="6" fill="#fff" stroke="#223"/><path d="M1.5 3 H4.5 M3 1.5 V4.5" stroke="#2040c0" stroke-width="1.1"/></svg>
<svg style="left:1892px;top:924px;" width="15" height="16" viewBox="0 0 15 16"><rect x="3" y="2" width="12" height="14" fill="#dfe7f6"/><path d="M5 5 H14 M5 8 H14 M5 11 H14 M5 14 H14" stroke="#9a9ea8" stroke-width="1.6"/><rect x="0" y="0" width="6" height="6" fill="#fff" stroke="#223"/><path d="M1.5 3 H4.5" stroke="#2040c0" stroke-width="1.1"/></svg>
<div style="left:141px;top:946px;width:1779px;height:2px;background:#323e58;"></div>
<div style="left:146px;top:948px;width:95px;height:19px;background:linear-gradient(#5670a6,#46609a 45%,#3a5088 55%,#4a64a0);border:1px solid #2a3a60;border-top:0;border-radius:0 0 3px 3px;box-shadow:inset -1px -1px 0 #7a94c8;"></div>
<div class="ts" style="left:150.5px;top:951px;font-size:11.5px;line-height:13.5px;transform-origin:0 0;transform:scaleX(0.9714);">Messaging Bar</div>
<div style="left:0px;top:967px;width:1920px;height:54px;background:linear-gradient(#1b1c1f 0,#3b3c3f 2px,#38393c 50%,#2c2d30 100%);border-top:1px solid #3a465e;"></div>
<div style="left:0px;top:968px;width:100px;height:52px;background:linear-gradient(90deg,rgba(70,90,140,.35),rgba(70,90,140,.25) 80%,rgba(70,90,140,0));"></div>
<div style="left:1874px;top:967px;width:46px;height:54px;background:#262627;"></div>
<div style="left:4px;top:970px;width:1px;height:48px;background:#1a1c20;"></div>
<div style="left:5px;top:970px;width:1px;height:48px;background:#5a6680;opacity:.6"></div>
<div style="left:10px;top:969px;width:108px;height:49px;border:1px solid #6a7c9c;border-radius:3px;opacity:.6;"></div>
<div style="left:11px;top:970px;width:17px;height:24px;border:1px solid #1a1e28;border-radius:2px;background:linear-gradient(#64738f 0%,#525e78 48%,#3c4352 52%,#475062 100%);box-shadow:inset 0 0 0 1px rgba(140,160,200,.32);"></div>
<div style="left:28px;top:970px;width:73px;height:31px;border:1px solid #1a1e28;border-radius:2px;background:linear-gradient(#64738f 0%,#525e78 48%,#3c4352 52%,#475062 100%);box-shadow:inset 0 0 0 1px rgba(140,160,200,.32);"></div>
<div style="left:101px;top:970px;width:16px;height:24px;border:1px solid #1a1e28;border-radius:2px;background:linear-gradient(#64738f 0%,#525e78 48%,#3c4352 52%,#475062 100%);box-shadow:inset 0 0 0 1px rgba(140,160,200,.32);"></div>
<div style="left:11px;top:994px;width:17px;height:23px;border:1px solid #1a1e28;border-radius:2px;background:linear-gradient(#64738f 0%,#525e78 48%,#3c4352 52%,#475062 100%);box-shadow:inset 0 0 0 1px rgba(140,160,200,.32);"></div>
<div style="left:28px;top:1001px;width:16px;height:16px;border:1px solid #1a1e28;border-radius:2px;background:linear-gradient(#64738f 0%,#525e78 48%,#3c4352 52%,#475062 100%);box-shadow:inset 0 0 0 1px rgba(140,160,200,.32);"></div>
<div style="left:44px;top:1001px;width:41px;height:16px;border:1px solid #1a1e28;border-radius:2px;background:linear-gradient(#64738f 0%,#525e78 48%,#3c4352 52%,#475062 100%);box-shadow:inset 0 0 0 1px rgba(140,160,200,.32);"></div>
<div style="left:85px;top:1001px;width:16px;height:16px;border:1px solid #1a1e28;border-radius:2px;background:linear-gradient(#64738f 0%,#525e78 48%,#3c4352 52%,#475062 100%);box-shadow:inset 0 0 0 1px rgba(140,160,200,.32);"></div>
<div style="left:101px;top:994px;width:16px;height:23px;border:1px solid #1a1e28;border-radius:2px;background:linear-gradient(#64738f 0%,#525e78 48%,#3c4352 52%,#475062 100%);box-shadow:inset 0 0 0 1px rgba(140,160,200,.32);"></div>
<svg style="left:15px;top:978px;" width="7" height="8" viewBox="0 0 7 8"><path d="M0 0 V8 M7 0 L2 4 L7 8 Z" stroke="#000" stroke-width="1.4" fill="#000"/></svg>
<svg style="left:106px;top:978px;" width="7" height="8" viewBox="0 0 7 8"><path d="M7 0 V8 M0 0 L5 4 L0 8 Z" stroke="#000" stroke-width="1.4" fill="#000"/></svg>
<svg style="left:14px;top:1003px;" width="9" height="6" viewBox="0 0 9 6"><path d="M4 0 L0 3 L4 6 Z M9 0 L5 3 L9 6 Z" fill="#000"/></svg>
<svg style="left:105px;top:1003px;" width="9" height="6" viewBox="0 0 9 6"><path d="M0 0 L4 3 L0 6 Z M5 0 L9 3 L5 6 Z" fill="#000"/></svg>
<svg style="left:34px;top:1006px;" width="4" height="6" viewBox="0 0 4 6"><path d="M4 0 L0 3 L4 6 Z" fill="#000"/></svg>
<svg style="left:91px;top:1006px;" width="4" height="6" viewBox="0 0 4 6"><path d="M0 0 L4 3 L0 6 Z" fill="#000"/></svg>
<div class="t" style="left:53px;top:977px;font-size:13px;line-height:15.0px;transform-origin:0 0;transform:scaleX(0.8412);font-weight:bold;color:#08090c;font-weight:bold;text-shadow:0 0 1px #000,1px 1px 0 rgba(140,150,175,.5);">Play</div>
<div class="t" style="left:59px;top:1001px;font-size:13px;line-height:15.0px;transform-origin:0 0;transform:scaleX(0.7261);font-weight:bold;color:#08090c;font-weight:bold;text-shadow:1px 1px 0 rgba(140,150,175,.5);">1x</div>
<div class="ts" style="left:137.5px;top:975px;font-size:11.5px;line-height:13.5px;transform-origin:0 0;transform:scaleX(1.0032);">Animation:</div>
<div style="left:195px;top:971px;width:161px;height:20px;border:1px solid #0e1118;border-radius:3px;background:linear-gradient(#51668f 0%,#3a4a6c 35%,#1b2231 52%,#232c40 80%,#2e3a55 100%);box-shadow:inset 0 0 0 1px #7288b8;"></div>
<svg style="left:342px;top:977px;" width="8" height="5" viewBox="0 0 8 5"><path d="M0 0 L4 4 L8 0" fill="none" stroke="#e8ecf4" stroke-width="1.2"/></svg>
<div style="left:126px;top:995px;width:105px;height:23px;border:1px solid #0e1118;border-radius:3px;background:linear-gradient(#4c5e86 0%,#38476c 45%,#1f2738 52%,#2c3852 100%);box-shadow:inset 0 0 0 1px #6a80b0;"></div>
<svg style="left:130px;top:998px;" width="15" height="15" viewBox="0 0 15 15"><rect x="0" y="0" width="15" height="15" fill="#5a4a20"/><rect x="2" y="2" width="11" height="10" fill="#e8e8e8"/><path d="M5 4 L10 7 L5 10 Z" fill="#222"/><path d="M0 13 H15" stroke="#d8a838" stroke-width="2" stroke-dasharray="2 1"/></svg>
<div class="ts" style="left:158.5px;top:999px;font-size:11.5px;line-height:13.5px;transform-origin:0 0;transform:scaleX(0.9666);">Track Editor</div>
<div style="left:235px;top:995px;width:79px;height:23px;border:1px solid #2a2a2c;border-radius:3px;background:linear-gradient(#4c4c4e 0%,#444446 48%,#39393b 52%,#3f3f41 100%);box-shadow:inset 0 0 0 1px rgba(110,110,115,.35);"></div>
<div style="left:319px;top:995px;width:38px;height:23px;border:1px solid #2a2a2c;border-radius:3px;background:linear-gradient(#4c4c4e 0%,#444446 48%,#39393b 52%,#3f3f41 100%);box-shadow:inset 0 0 0 1px rgba(110,110,115,.35);"></div>
<svg style="left:237px;top:998px;" width="14" height="16" viewBox="0 0 15 16"><rect x="1" y="1" width="3.5" height="14" fill="#3a9a48"/><path d="M2.5 0 V16" stroke="#1a3a1a" stroke-width=".6"/><path d="M10 1 L11 4 L14 3 L12.5 6 L15 8 L12 8.5 L12 11.5 L10 9.5 L8 11.5 L8 8.5 L5 8 L7.5 6 L6 3 L9 4 Z" fill="#e04828"/><circle cx="10" cy="6.5" r="1.6" fill="#f0c030"/></svg>
<div class="t" style="left:267px;top:999px;font-size:11.5px;line-height:13.5px;transform-origin:0 0;transform:scaleX(0.8691);color:#121212;text-shadow:0 1px 0 rgba(120,120,120,.4);">Set Key</div>
<svg style="left:331px;top:998px;" width="14" height="16" viewBox="0 0 14 16"><rect x="1" y="1" width="3.5" height="14" fill="#c84838"/><path d="M2.5 0 V16" stroke="#3a1a1a" stroke-width=".6"/><path d="M5 9 L8 13 L13 5" stroke="#2a9a38" stroke-width="2" fill="none"/></svg>
<div style="left:363px;top:969px;width:2px;height:50px;background:#202124;"></div>
<div style="left:366px;top:971px;width:1px;height:46px;background:#26272a;"></div>
<div style="left:367px;top:971px;width:1px;height:46px;background:#55565a;"></div>
<div style="left:372px;top:969px;width:1501px;height:32px;background:linear-gradient(#1c1c1d 0,#222223 4px,#2e2e2f 5px,#2c2c2d 100%);border:1px solid #181819;border-bottom-color:#1c1c1d;"></div>
<div style="left:372px;top:1001px;width:1501px;height:18px;background:linear-gradient(#4e4e4e 0,#484848 75%,#2c2c2c 100%);"></div>
<svg style="left:0;top:0" width="1920" height="1080" viewBox="0 0 1920 1080"><path d="M372 973.5 H1873" stroke="#707070" stroke-width="1"/><path d="M378.5 973 v11 M390.5 973 v6 M403.5 973 v6 M415.5 973 v6 M427.5 973 v6 M440.5 973 v6 M452.5 973 v6 M465.5 973 v6 M477.5 973 v6 M489.5 973 v6 M502.5 973 v6 M514.5 973 v6 M527.5 973 v11 M539.5 973 v6 M552.5 973 v6 M564.5 973 v6 M576.5 973 v6 M589.5 973 v6 M601.5 973 v6 M614.5 973 v6 M626.5 973 v6 M638.5 973 v6 M651.5 973 v6 M663.5 973 v6 M676.5 973 v11 M688.5 973 v6 M701.5 973 v6 M713.5 973 v6 M725.5 973 v6 M738.5 973 v6 M750.5 973 v6 M763.5 973 v6 M775.5 973 v6 M787.5 973 v6 M800.5 973 v6 M812.5 973 v6 M825.5 973 v11 M837.5 973 v6 M850.5 973 v6 M862.5 973 v6 M874.5 973 v6 M887.5 973 v6 M899.5 973 v6 M912.5 973 v6 M924.5 973 v6 M936.5 973 v6 M949.5 973 v6 M961.5 973 v6 M974.5 973 v11 M986.5 973 v6 M998.5 973 v6 M1011.5 973 v6 M1023.5 973 v6 M1036.5 973 v6 M1048.5 973 v6 M1061.5 973 v6 M1073.5 973 v6 M1085.5 973 v6 M1098.5 973 v6 M1110.5 973 v6 M1123.5 973 v11 M1135.5 973 v6 M1147.5 973 v6 M1160.5 973 v6 M1172.5 973 v6 M1185.5 973 v6 M1197.5 973 v6 M1210.5 973 v6 M1222.5 973 v6 M1234.5 973 v6 M1247.5 973 v6 M1259.5 973 v6 M1272.5 973 v11 M1284.5 973 v6 M1296.5 973 v6 M1309.5 973 v6 M1321.5 973 v6 M1334.5 973 v6 M1346.5 973 v6 M1359.5 973 v6 M1371.5 973 v6 M1383.5 973 v6 M1396.5 973 v6 M1408.5 973 v6 M1421.5 973 v11 M1433.5 973 v6 M1445.5 973 v6 M1458.5 973 v6 M1470.5 973 v6 M1483.5 973 v6 M1495.5 973 v6 M1508.5 973 v6 M1520.5 973 v6 M1532.5 973 v6 M1545.5 973 v6 M1557.5 973 v6 M1570.5 973 v11 M1582.5 973 v6 M1594.5 973 v6 M1607.5 973 v6 M1619.5 973 v6 M1632.5 973 v6 M1644.5 973 v6 M1657.5 973 v6 M1669.5 973 v6 M1681.5 973 v6 M1694.5 973 v6 M1706.5 973 v6 M1719.5 973 v11 M1731.5 973 v6 M1743.5 973 v6 M1756.5 973 v6 M1768.5 973 v6 M1781.5 973 v6 M1793.5 973 v6 M1806.5 973 v6 M1818.5 973 v6 M1830.5 973 v6 M1843.5 973 v6 M1855.5 973 v6 M1868.5 973 v11" stroke="#909090" stroke-width="1" fill="none"/></svg>
<div class="t" style="left:380.5px;top:985px;color:#8c8c8c;font-size:11.5px;">0</div>
<div class="t" style="left:520.3px;top:985px;color:#8c8c8c;font-size:11.5px;">12</div>
<div class="t" style="left:669.3px;top:985px;color:#8c8c8c;font-size:11.5px;">24</div>
<div class="t" style="left:818.3px;top:985px;color:#8c8c8c;font-size:11.5px;">36</div>
<div class="t" style="left:967.3px;top:985px;color:#8c8c8c;font-size:11.5px;">48</div>
<div class="t" style="left:1116.3px;top:985px;color:#8c8c8c;font-size:11.5px;">60</div>
<div class="t" style="left:1265.3px;top:985px;color:#8c8c8c;font-size:11.5px;">72</div>
<div class="t" style="left:1414.2px;top:985px;color:#8c8c8c;font-size:11.5px;">84</div>
<div class="t" style="left:1563.2px;top:985px;color:#8c8c8c;font-size:11.5px;">96</div>
<div class="t" style="left:1709.0px;top:985px;color:#8c8c8c;font-size:11.5px;">108</div>
<div style="left:1860px;top:985px;width:13px;height:14px;overflow:hidden;"><div class="t" style="left:0;top:0;color:#8c8c8c;font-size:11.5px;">120</div></div>
<div style="left:375px;top:979px;width:2px;height:15px;background:#4a6cc0;"></div>
<div style="left:376.5px;top:973px;width:2px;height:26px;background:linear-gradient(90deg,#fff 60%,#2a4ab8);"></div>
<div style="left:0px;top:1021px;width:1920px;height:19px;background:linear-gradient(90deg,#2b3142 0,#272d3c 95px,#19191b 97px);"></div>
<div class="t" style="left:4.5px;top:1025px;font-size:11.5px;line-height:13.5px;transform-origin:0 0;transform:scaleX(0.9784);color:#fff;">Flips mesh, poly, vertex or edge. [F]</div>
<div style="left:1526px;top:1024px;width:65px;height:15px;border:1px solid #0c1020;background:linear-gradient(#3f5fb8,#2848a0 50%,#1c3888 55%,#2a4aa0);box-shadow:inset 0 0 0 1px rgba(130,160,230,.5);"></div>
<div class="t" style="left:1537px;top:1024.5px;font-size:11.5px;line-height:13.5px;transform-origin:0 0;transform:scaleX(0.9092);font-weight:bold;font-weight:bold;color:#fff;text-shadow:1px 1px 0 #000;">Selected</div>
<div style="left:1596px;top:1024px;width:33px;height:15px;border:1px solid #0c0e14;background:linear-gradient(#3a4660,#262e42 50%,#1a2030 55%,#242c40);box-shadow:inset 0 0 0 1px rgba(120,135,170,.5);"></div>
<div class="t" style="left:1600px;top:1024.5px;font-size:11.5px;line-height:13.5px;transform-origin:0 0;transform:scaleX(0.9549);font-weight:bold;font-weight:bold;color:#fff;text-shadow:1px 1px 0 #000;">Auto</div>
<div style="left:1635px;top:1024px;width:53px;height:15px;border:1px solid #0c1020;background:linear-gradient(#3f5fb8,#2848a0 50%,#1c3888 55%,#2a4aa0);box-shadow:inset 0 0 0 1px rgba(130,160,230,.5);"></div>
<div style="left:1639px;top:1025px;width:13px;height:13px;background:#f01010;"></div>
<div class="t" style="left:1655px;top:1024.5px;font-size:11.5px;line-height:13.5px;transform-origin:0 0;transform:scaleX(0.9248);font-weight:bold;font-weight:bold;color:#fff;text-shadow:1px 1px 0 #000;">Pivot</div>
<div style="left:1694px;top:1024px;width:19px;height:15px;border:1px solid #0c0e14;background:linear-gradient(#2a3040,#1a1e28);box-shadow:inset 0 0 0 1px rgba(90,100,130,.4);"></div>
<svg style="left:1697px;top:1025px;" width="13" height="13" viewBox="0 0 13 13"><circle cx="6.5" cy="6.5" r="6" fill="url(#gHelp)" stroke="#c8d4f0" stroke-width=".8"/><path d="M3.5 6.5 L6 9.5 L10 3.5" stroke="#fff" stroke-width="1.6" fill="none"/></svg>
<div class="t" style="left:1719px;top:1025px;font-size:11.5px;line-height:13.5px;transform-origin:0 0;transform:scaleX(0.9462);color:#fff;">Cursor: -0.22463, 1.02603, -0.26643</div>
<div style="left:0px;top:1040px;width:1920px;height:40px;background:linear-gradient(90deg,#1d1d20 0,#1d1d1f 38%,#242321 46%,#33302a 52%,#36332a 60%,#2e2b25 68%,#25231f 76%,#1f1f20 84%,#1e1e20 100%);"></div>
<svg style="left:16px;top:1052px;" width="16" height="16" viewBox="0 0 16 16"><path d="M0 2.3 L6.6 1.4 V7.6 H0 Z M7.4 1.3 L16 0 V7.6 H7.4 Z M0 8.4 H6.6 V14.6 L0 13.7 Z M7.4 8.4 H16 V16 L7.4 14.7 Z" fill="#fff"/></svg>
<div style="left:49px;top:1041px;width:343px;height:39px;background:#343435;border:1px solid #505052;"></div>
<svg style="left:61px;top:1052px;" width="16" height="16" viewBox="0 0 16 16"><circle cx="9.5" cy="6.5" r="5" fill="none" stroke="#fff" stroke-width="1.4"/><path d="M6 10 L0.8 15.2" stroke="#fff" stroke-width="1.5"/></svg>
<div class="t" style="left:88px;top:1051px;font-size:15px;line-height:17.0px;transform-origin:0 0;transform:scaleX(0.9654);color:#e4e4e4;">Type here to search</div>
<svg style="left:408px;top:1053px;" width="15" height="15" viewBox="0 0 15 15"><circle cx="7.5" cy="7.5" r="6.3" fill="none" stroke="#fff" stroke-width="2"/></svg>
<svg style="left:456px;top:1053px;" width="16" height="14" viewBox="0 0 16 14"><path d="M1 1 H3 M13 1 H15 M1 13 H3 M13 13 H15" stroke="#fff" stroke-width="1.2"/><rect x="1.5" y="3.5" width="9" height="7" fill="none" stroke="#fff" stroke-width="1.2"/><path d="M13.5 3 V11" stroke="#fff" stroke-width="1.2"/><path d="M15.5 4 V6 M15.5 8 V10" stroke="#fff" stroke-width="1"/></svg>
<div style="left:820px;top:1040px;width:46px;height:40px;background:#b8651c;"></div>
<div style="left:867px;top:1040px;width:46px;height:40px;background:#4c4a48;"></div>
<div style="left:820px;top:1078px;width:46px;height:2px;background:#ff8a18;"></div>
<div style="left:867px;top:1078px;width:46px;height:2px;background:#8ab8e8;"></div>
<div style="left:494.0px;top:1078px;width:38px;height:2px;background:#8ab4e8;"></div>
<div style="left:542.0px;top:1078px;width:38px;height:2px;background:#8ab4e8;"></div>
<div style="left:729.0px;top:1078px;width:38px;height:2px;background:#8ab4e8;"></div>
<svg style="left:501.0px;top:1048.0px;" width="24" height="24" viewBox="0 0 24 24"><circle cx="12" cy="12" r="11.5" fill="#fff"/><path d="M12 12 L2 6.2 A11.5 11.5 0 0 1 22 6.2 Z" fill="#e33b2e"/><path d="M12 12 L22 6.2 A11.5 11.5 0 0 1 12 23.5 Z" fill="#fbc116"/><path d="M12 12 L12 23.5 A11.5 11.5 0 0 1 2 6.2 Z" fill="#2da94f"/><circle cx="12" cy="12" r="5.2" fill="#fff"/><circle cx="12" cy="12" r="4.1" fill="#4285f4"/></svg>
<svg style="left:549.0px;top:1048.0px;" width="24" height="24" viewBox="0 0 24 24"><path d="M1 4 H9 L11 6 H23 V9 H1 Z" fill="#e8a818"/><rect x="1" y="7" width="22" height="14" rx="1" fill="#fcd462"/><rect x="6" y="13" width="12" height="8" fill="#3a8ae0"/><rect x="8" y="15" width="8" height="6" fill="#fcd462"/></svg>
<svg style="left:595.0px;top:1048.0px;" width="24" height="24" viewBox="0 0 24 24"><rect x="2" y="2" width="20" height="15" rx="1" fill="#e8ecf0" stroke="#8a94a0" stroke-width="1"/><rect x="4" y="4" width="16" height="11" fill="#dceaf8"/><path d="M5 12 L8 8 L10 11 L12 6 L14 10 L16 7 L19 11" stroke="#2a7ad0" stroke-width="1.2" fill="none"/><rect x="9" y="17" width="6" height="3" fill="#a8b0b8"/><ellipse cx="12" cy="21" rx="6" ry="1.8" fill="#c8d0d8"/></svg>
<svg style="left:641.0px;top:1048.0px;" width="24" height="24" viewBox="0 0 24 24"><path d="M3 8 H21 V22 H3 Z" fill="#f2f2f2"/><path d="M8 8 V5 Q8 2 12 2 Q16 2 16 5 V8" fill="none" stroke="#f2f2f2" stroke-width="1.6"/><rect x="8" y="11" width="3.6" height="3.6" fill="#f25022"/><rect x="12.4" y="11" width="3.6" height="3.6" fill="#7fba00"/><rect x="8" y="15.4" width="3.6" height="3.6" fill="#00a4ef"/><rect x="12.4" y="15.4" width="3.6" height="3.6" fill="#ffb900"/></svg>
<svg style="left:689.0px;top:1049.0px;" width="24" height="24" viewBox="0 0 24 24"><path d="M0 10 L12 1 L24 10 V22 H0 Z" fill="#1a78d8"/><path d="M0 10 L12 18 L24 10 V22 H0 Z" fill="#3aa0f0"/><path d="M0 22 L9 14 M24 22 L15 14" stroke="#8cd0ff" stroke-width="1"/></svg>
<svg style="left:736.0px;top:1048.0px;" width="24" height="24" viewBox="0 0 24 24"><circle cx="11" cy="11" r="10.5" fill="#5a6ad8"/><path d="M5 8 Q11 5 17 8 Q19 12 18 16 Q16 17 15 16 L14 15 Q11 16 8 15 L7 16 Q6 17 4 16 Q3 12 5 8 Z" fill="#fff"/><circle cx="8.7" cy="12" r="1.4" fill="#5a6ad8"/><circle cx="13.3" cy="12" r="1.4" fill="#5a6ad8"/><circle cx="18" cy="17.5" r="6" fill="#e83838"/><text x="18" y="20.5" font-family="Liberation Sans" font-weight="bold" font-size="8" text-anchor="middle" fill="#fff">9+</text></svg>
<svg style="left:784.0px;top:1048.0px;" width="24" height="24" viewBox="0 0 24 24"><path d="M5 5 L15 1 L21 3 V21 L15 23 L5 19 L15 20 V5 L9 7 V16 L5 19 Z" fill="#e84a1c"/><path d="M15 1 L21 3 V21 L15 23 Z" fill="#ff8a30"/></svg>
<svg style="left:831.0px;top:1048.0px;" width="24" height="24" viewBox="0 0 24 24"><circle cx="12" cy="12" r="11.5" fill="#1ed760"/><path d="M5.5 8.5 Q12 6 19 9.5 M6.5 12.2 Q12 10 17.5 13 M7.5 15.6 Q12 14 16 16.2" stroke="#121212" stroke-width="2" fill="none" stroke-linecap="round"/></svg>
<svg style="left:878.0px;top:1048.0px;" width="24" height="24" viewBox="0 0 24 24"><rect x="4" y="1" width="16" height="22" rx="3" fill="#2858e0" transform="skewX(-6) translate(2,0)"/><path d="M4 1 H17 L20 8 L9 8 Z" fill="#e02020" transform="skewX(-6) translate(2,0)"/><path d="M7 6 H18 L10 17 H18 V20 H5 L13 9 H7 Z" fill="#e83030"/><path d="M5 20 L13 9 L15 12 L10 17 H18 V20 Z" fill="#2040c0"/></svg>
<svg style="left:925.0px;top:1048.0px;" width="24" height="24" viewBox="0 0 24 24"><rect x="2" y="1" width="15" height="14" fill="#2a50c8" stroke="#c8d0e0" stroke-width="1.4"/><path d="M3 2 L16 2 L3 14 Z" fill="#5a88f0"/><rect x="7" y="15" width="5" height="3" fill="#b8c0c8"/><ellipse cx="9.5" cy="20" rx="6.5" ry="2.5" fill="#d8dce4"/><circle cx="19" cy="19" r="4.6" fill="#e8e8e8"/><path d="M16.8 19 l2 -1.6 v3.2 Z M21.2 19 l-2 -1.6 v3.2 Z" fill="#2a8a30"/></svg>
<div style="left:973.5px;top:1049.5px;width:21px;height:21px;background:#001e36;border-radius:4px;"></div>
<div class="t" style="left:973.5px;top:1053px;width:21px;text-align:center;font-size:11px;font-weight:bold;color:#31a8ff;letter-spacing:-.3px;">Ps</div>
<div style="left:1020.5px;top:1049.5px;width:21px;height:21px;background:#00005b;border-radius:4px;"></div>
<div class="t" style="left:1020.5px;top:1053px;width:21px;text-align:center;font-size:11px;font-weight:bold;color:#9999ff;letter-spacing:-.3px;">Pr</div>
<div style="left:1067.5px;top:1049.5px;width:21px;height:21px;background:#00005b;border-radius:4px;"></div>
<div class="t" style="left:1067.5px;top:1053px;width:21px;text-align:center;font-size:11px;font-weight:bold;color:#9999ff;letter-spacing:-.3px;">Ae</div>
<div style="left:1113.5px;top:1049.5px;width:21px;height:21px;background:#470137;border-radius:4px;"></div>
<div class="t" style="left:1113.5px;top:1053px;width:21px;text-align:center;font-size:11px;font-weight:bold;color:#ff61f6;letter-spacing:-.3px;">Dw</div>
<svg style="left:1160.0px;top:1048.0px;" width="24" height="24" viewBox="0 0 24 24"><circle cx="12" cy="12" r="11" fill="#2a2a2e" stroke="#d8d8d8" stroke-width="1.6"/><path d="M12 12 Q8 4 14 2.5 M12 12 Q20 13 19 19 M12 12 Q5 17 4 11" stroke="#d8d8d8" stroke-width="1.6" fill="none"/><circle cx="12" cy="12" r="2" fill="#d8d8d8"/></svg>
<svg style="left:1206.0px;top:1048.0px;" width="24" height="24" viewBox="0 0 24 24"><path d="M1 8 L7 3 V6 H20 V10 H7 V13 Z" fill="none" stroke="#c87a18" stroke-width="1.3"/><path d="M23 16 L17 11 V14 H4 V18 H17 V21 Z" fill="none" stroke="#c87a18" stroke-width="1.3"/></svg>
<svg style="left:1253.0px;top:1048.0px;" width="24" height="24" viewBox="0 0 24 24"><circle cx="12" cy="12" r="11.5" fill="#2a9a30"/><circle cx="12" cy="12" r="9" fill="#e8f4e8"/><text x="12" y="16" font-family="Liberation Sans" font-weight="bold" font-size="10.5" text-anchor="middle" fill="#1a1a1a">HS</text></svg>
<svg style="left:1301.0px;top:1048.0px;" width="24" height="24" viewBox="0 0 24 24"><rect x="1" y="1" width="22" height="22" rx="4" fill="#f88a28"/><path d="M6 7 Q6 5 8 5 Q11 5 12 7 Q13 5 16 5 Q18 5 18 7 V9 Q16 12 18 15 V17 Q18 19 16 19 Q13 19 12 17 Q11 19 8 19 Q6 19 6 17 V15 Q8 12 6 9 Z M9.5 9.5 H14.5 V14.5 H9.5 Z" fill="#fff" fill-rule="evenodd"/></svg>
<div style="left:1347.5px;top:1048px;width:25px;height:12px;background:#e83828;"></div>
<div style="left:1347.5px;top:1060px;width:25px;height:12px;background:#2a3a4a;"></div>
<div class="t" style="left:1347.5px;top:1049px;width:25px;text-align:center;font-size:7px;line-height:10px;font-weight:bold;color:#fff;">VOICE</div>
<div class="t" style="left:1347.5px;top:1061px;width:25px;text-align:center;font-size:6px;line-height:10px;font-weight:bold;color:#c8d0d8;">MEETER</div>
<svg style="left:1395.0px;top:1048.0px;" width="24" height="24" viewBox="0 0 24 24"><circle cx="12" cy="13" r="8" fill="none" stroke="#fff" stroke-width="3.2"/><circle cx="12" cy="13" r="11" fill="none" stroke="#fff" stroke-width="1.2" stroke-dasharray="1 2.2"/><path d="M12 13 L18 7" stroke="#fff" stroke-width="2.4"/></svg>
<svg style="left:1443.0px;top:1048.0px;" width="24" height="24" viewBox="0 0 24 24"><path d="M2 22 L14 10" stroke="#c8a818" stroke-width="1.6"/><path d="M12 12 L20 4" stroke="#d82020" stroke-width="3"/><path d="M18 2 L22 6 M20 1 L23 4" stroke="#202020" stroke-width="1.6"/></svg>
<svg style="left:1489.0px;top:1048.0px;" width="24" height="24" viewBox="0 0 24 24"><circle cx="12" cy="12" r="10.5" fill="none" stroke="#9a3ac8" stroke-width="2"/><circle cx="12" cy="12" r="6.5" fill="#7a2aa8"/><path d="M12 6.5 L13.5 10.5 L17.5 12 L13.5 13.5 L12 17.5 L10.5 13.5 L6.5 12 L10.5 10.5 Z" fill="#e8c8ff"/></svg>
<svg style="left:1536.0px;top:1048.0px;" width="24" height="24" viewBox="0 0 24 24"><rect x="0" y="0" width="24" height="24" fill="#f03a40"/><path d="M5 12 L9.5 7.5 L14 12 L9.5 16.5 Z" fill="#fff"/><path d="M12.5 7.5 H15 L19.5 12 L15 16.5 H12.5 L17 12 Z" fill="#fff"/></svg>
<svg style="left:1611.0px;top:1049.0px;" width="24" height="24" viewBox="0 0 24 24"><path d="M5 16 Q0 16 1 11 Q2 8 5 8.5 Q7 3 12 5 Q16 3 18 8 Q23 8 22 13 Q22 16 18 16 Z" fill="#d8ecfc"/><path d="M5 16 Q0 16 1 11 Q6 13 12 10 Q18 8 22 13 Q22 16 18 16 Z" fill="#8cc8f4"/></svg>
<svg style="left:1653px;top:1055px;" width="12" height="7" viewBox="0 0 12 7"><path d="M0.5 6.5 L6 1 L11.5 6.5" fill="none" stroke="#fff" stroke-width="1.3"/></svg>
<svg style="left:1678px;top:1052px;" width="12" height="17" viewBox="0 0 12 17"><rect x="0.6" y="4.5" width="7.5" height="8" rx="1.5" fill="none" stroke="#fff" stroke-width="1.1"/><path d="M8.2 7.5 L11.4 5.5 V11.5 L8.2 9.5" fill="none" stroke="#fff" stroke-width="1.1"/><path d="M2 1.5 Q5.5 -.5 9 1.5 M2 15.5 Q5.5 17.5 9 15.5" fill="none" stroke="#fff" stroke-width="1"/></svg>
<svg style="left:1698px;top:1053px;" width="18" height="15" viewBox="0 0 18 15"><path d="M3 10 Q0 10 .5 7 Q1 5 3.5 5.5 Q5 1.5 8.5 3 Q11.5 2 12.5 5.5 Q15 6 14.5 8.5 Q14 10 12 10 Z" fill="#d0d0d0"/><circle cx="13" cy="10.5" r="4.2" fill="#e82020"/><path d="M10.8 10.5 H15.2" stroke="#fff" stroke-width="1.3"/></svg>
<svg style="left:1723px;top:1053px;" width="17" height="15" viewBox="0 0 17 15"><rect x="2.5" y="1.5" width="13" height="8.5" fill="none" stroke="#fff" stroke-width="1.1"/><path d="M9 10 V13 M5 13.5 H13" stroke="#fff" stroke-width="1.1"/><rect x="0.5" y="0.5" width="4" height="4" fill="#1f1f20" stroke="#fff" stroke-width=".9"/></svg>
<svg style="left:1747px;top:1053px;" width="16" height="15" viewBox="0 0 16 15"><path d="M0.6 5 H3.5 L7.5 1.5 V13.5 L3.5 10 H0.6 Z" fill="none" stroke="#fff" stroke-width="1.1"/><path d="M9.8 5 Q11.4 7.5 9.8 10" fill="none" stroke="#fff" stroke-width="1.1"/><path d="M12 3.2 Q14.8 7.5 12 11.8" fill="none" stroke="#fff" stroke-width="1" opacity=".75"/><path d="M14 1.6 Q17.5 7.5 14 13.4" fill="none" stroke="#fff" stroke-width="1" opacity=".4"/></svg>
<div class="t" style="left:1773px;top:1053px;font-size:11.5px;line-height:13.5px;transform-origin:0 0;transform:scaleX(0.9229);color:#fff;">ENG</div>
<div class="t" style="left:1824px;top:1044px;font-size:11.5px;line-height:13.5px;transform-origin:0 0;transform:scaleX(0.9384);color:#fff;">9:02</div>
<div class="t" style="left:1810px;top:1062px;font-size:11.5px;line-height:13.5px;transform-origin:0 0;transform:scaleX(0.9775);color:#fff;">7/10/2021</div>
<svg style="left:1880px;top:1050px;" width="16" height="15" viewBox="0 0 16 15"><path d="M0.6 0.6 H15.4 V11 H5 L0.6 14.5 Z" fill="#fff"/><path d="M3 3.5 H13 M3 5.8 H13 M3 8.1 H13" stroke="#1f1f20" stroke-width=".9"/></svg>
<svg style="left:1886px;top:1059px;" width="15" height="15" viewBox="0 0 15 15"><circle cx="7.5" cy="7.5" r="6.8" fill="#1f1f20" stroke="#9a9a9a" stroke-width="1"/><text x="7.5" y="11.5" font-family="Liberation Sans" font-size="11" text-anchor="middle" fill="#fff">3</text></svg>
<div style="left:1914px;top:1040px;width:1px;height:40px;background:#6a6a6a;"></div>
<svg style="left:0;top:0" width="1920" height="1080" viewBox="0 0 1920 1080"><defs><pattern id="led" width="18.2" height="22" patternUnits="userSpaceOnUse" patternTransform="translate(671.5,664) skewY(-2.1)"><rect width="18.2" height="22" fill="#3c3c3a"/><rect y="0" width="18.2" height="7" fill="#4c4b48"/><rect x="3" y="2" width="5" height="2" fill="#5e5a52"/><rect x="11" y="4" width="4" height="2" fill="#585650"/><rect y="7" width="18.2" height="4" fill="#323232"/><rect x="3.5" y="10" width="7" height="9" fill="#5e5d5a"/><rect x="5.5" y="11" width="2.5" height="5" fill="#7e7a70"/><rect y="19" width="18.2" height="3" fill="#444442"/></pattern><filter id="blr"><feGaussianBlur stdDeviation="1.1"/></filter></defs><polygon points="630,721.6 639.1,707.1 648.3,670.4 669,651.3 682.6,651.3 682.6,592.5 681,591 721.6,590.2 720,593 720.8,649.8 727.7,649.8 731.5,646 733,641 733,577 735,575.8 738.5,576.3 739.2,580 740.7,640 737.6,648.3 742.2,648.5 742.2,613.6 814.8,612.7 817,647.5 870,646 917.6,644.4 913,619 911.2,617.5 983,617.7 986.1,643.7 1006,642.6 1002.1,617.9 990.7,615.2 1035.8,616.2 1038.8,642.1 1068.6,644.4 1090,649 1119.8,686.2 1119.8,687.4 870,712.4 692,721.6" fill="#000"/><polygon points="672.7,681.5 775.8,683 775.8,692.8 660.5,690.5" fill="#343434" /><polygon points="780.4,682.3 886.8,683.8 892.5,692.8 780.4,692.8" fill="#343434" /><polygon points="892.9,677.5 980,673.8 996.8,682.5 894.4,686" fill="#343434" /><polygon points="996.8,670 1065.5,668.5 1087.7,675 996.8,677.5" fill="#343434" /><g filter="url(#blr)"><polygon points="672.7,668.9 775.8,665.1 775.8,683.4 672.7,681.9" fill="url(#led)" /><polygon points="780.4,664.3 886.8,664.3 886.8,684.2 780.4,682.6" fill="url(#led)" /><polygon points="885.3,660.5 980,656.7 980,674.2 892.9,678" fill="url(#led)" /><polygon points="990,656 1065.5,652 1065.5,668.9 996.8,670.4" fill="url(#led)" /></g><polygon points="886.8,664.3 890,666 895,690 886.8,684.2" fill="#000" /><polygon points="980,656.7 990,660 996.8,670.4 996.8,682 980,674.2" fill="#2e2e2e" /><polygon points="775.8,665.1 780.4,664.3 780.4,682.6 775.8,683.4" fill="#000" /><path d="M660.5 690.7 L775.8 693.2 L775.8 682.5 M780.4 693 L891.4 693 M894 686.3 L996.8 682.8 M996.8 677.2 L1087.7 675.2 M640.6 709.4 L661.2 685.7" stroke="#f4f4f0" stroke-width="1.1" fill="none"/><path d="M892.8 686.6 L897.5 693.2 L892.8 693.2 Z" fill="#f4f4f0"/><path d="M645.5 761.6 L601.6 944.6" stroke="#5a7aa6" stroke-width="1"/><path d="M167.6 890 L178 905.5 L172.5 905.5 L172.5 915.6 L182.5 915.6 L182.5 910.4 L197.8 920.5 L182.5 930.8 L182.5 925.6 L162.4 925.6 L162.4 905.5 L157.2 905.5 Z" fill="#e4dcc8" fill-opacity=".7" stroke="#d8b048" stroke-width="1"/><path d="M160.5 903 V934.5" stroke="#18a028" stroke-width="1.3"/><path d="M160.5 934.4 H192" stroke="#f05050" stroke-width="1"/><path d="M155 933.6 L160 934.4" stroke="#5a7af0" stroke-width="1"/></svg>
<div class="t" style="left:153.5px;top:883px;font-size:11.5px;line-height:13.5px;transform-origin:0 0;transform:scaleX(1.1079);font-weight:bold;color:#18a028;font-weight:bold;">Y</div>
<div class="t" style="left:145px;top:924px;font-size:11px;line-height:13.0px;transform-origin:0 0;transform:scaleX(0.8930);font-weight:bold;color:#5a7af0;font-weight:bold;">Z</div>
<div class="t" style="left:195px;top:926px;font-size:11px;line-height:13.0px;transform-origin:0 0;transform:scaleX(0.8179);font-weight:bold;color:#f04848;font-weight:bold;">X</div></body></html>
